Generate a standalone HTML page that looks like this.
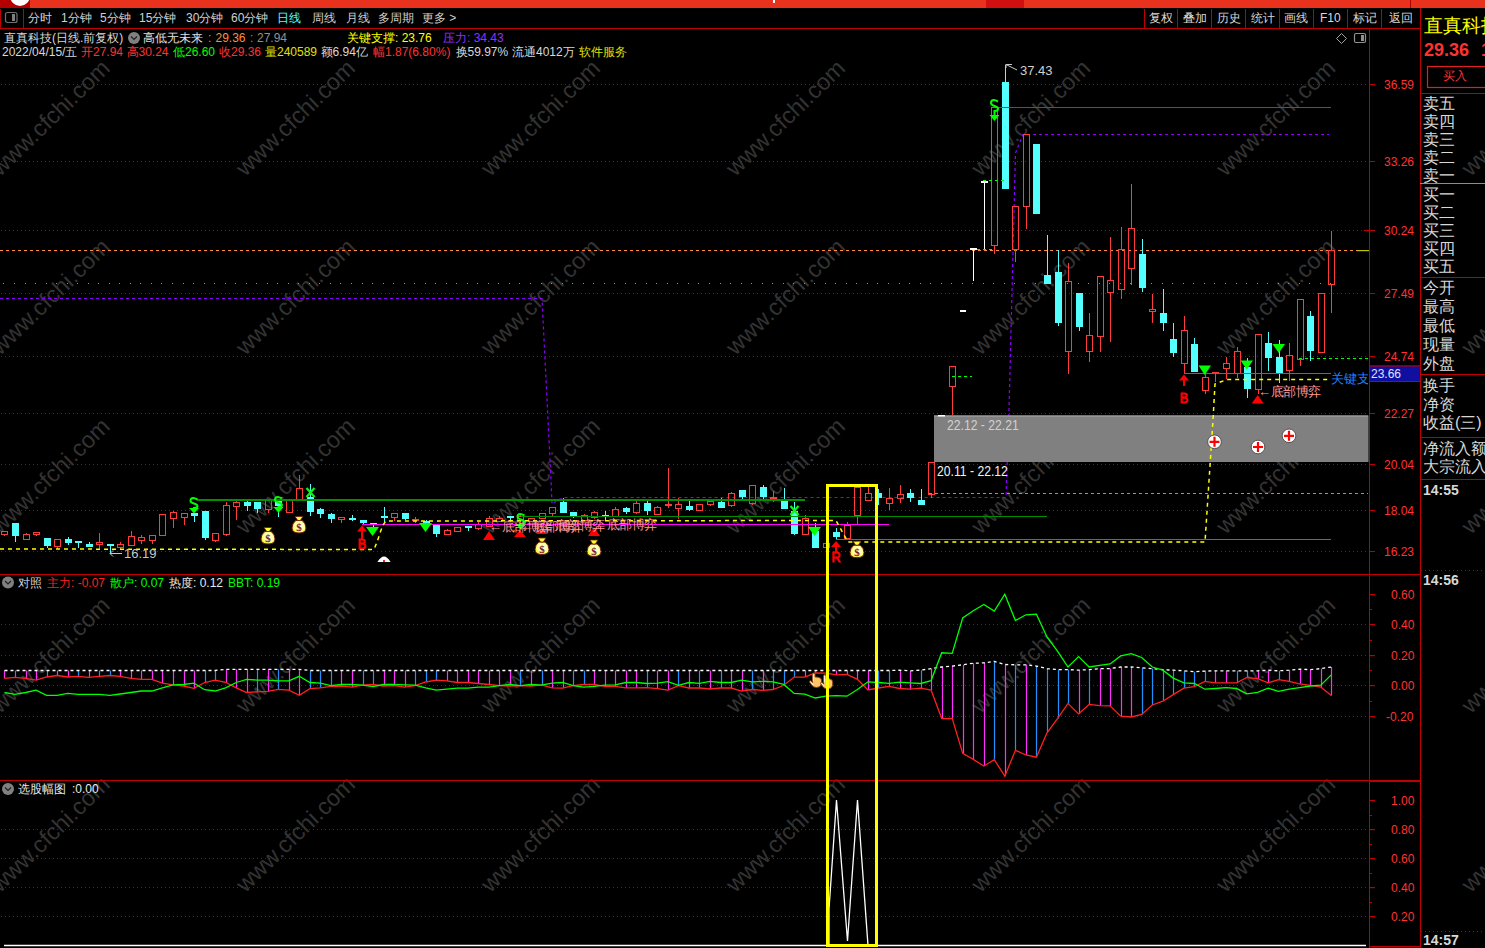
<!DOCTYPE html><html><head><meta charset="utf-8"><style>
html,body{margin:0;padding:0;background:#000;width:1485px;height:948px;overflow:hidden;font-family:"Liberation Sans",sans-serif;}
.t{position:absolute;white-space:nowrap;line-height:1;}
svg{position:absolute;left:0;top:0;}
</style></head><body>
<svg width="1485" height="948" viewBox="0 0 1485 948"><defs><radialGradient id="bagg" cx="0.55" cy="0.45" r="0.6"><stop offset="0" stop-color="#ffffe8"/><stop offset="0.6" stop-color="#ffffa0"/><stop offset="1" stop-color="#f0f000"/></radialGradient></defs>
<g><text x="51.4" y="119.1" transform="rotate(-44 51.4 119.1)" text-anchor="middle" dominant-baseline="middle" font-size="23.4" fill="#333333" font-family="Liberation Sans">www.cfchi.com</text><text x="296.5" y="119.1" transform="rotate(-44 296.5 119.1)" text-anchor="middle" dominant-baseline="middle" font-size="23.4" fill="#333333" font-family="Liberation Sans">www.cfchi.com</text><text x="541.6" y="119.1" transform="rotate(-44 541.6 119.1)" text-anchor="middle" dominant-baseline="middle" font-size="23.4" fill="#333333" font-family="Liberation Sans">www.cfchi.com</text><text x="786.7" y="119.1" transform="rotate(-44 786.7 119.1)" text-anchor="middle" dominant-baseline="middle" font-size="23.4" fill="#333333" font-family="Liberation Sans">www.cfchi.com</text><text x="1031.8" y="119.1" transform="rotate(-44 1031.8 119.1)" text-anchor="middle" dominant-baseline="middle" font-size="23.4" fill="#333333" font-family="Liberation Sans">www.cfchi.com</text><text x="1276.9" y="119.1" transform="rotate(-44 1276.9 119.1)" text-anchor="middle" dominant-baseline="middle" font-size="23.4" fill="#333333" font-family="Liberation Sans">www.cfchi.com</text><text x="1522.0" y="119.1" transform="rotate(-44 1522.0 119.1)" text-anchor="middle" dominant-baseline="middle" font-size="23.4" fill="#333333" font-family="Liberation Sans">www.cfchi.com</text><text x="51.4" y="298.1" transform="rotate(-44 51.4 298.1)" text-anchor="middle" dominant-baseline="middle" font-size="23.4" fill="#333333" font-family="Liberation Sans">www.cfchi.com</text><text x="296.5" y="298.1" transform="rotate(-44 296.5 298.1)" text-anchor="middle" dominant-baseline="middle" font-size="23.4" fill="#333333" font-family="Liberation Sans">www.cfchi.com</text><text x="541.6" y="298.1" transform="rotate(-44 541.6 298.1)" text-anchor="middle" dominant-baseline="middle" font-size="23.4" fill="#333333" font-family="Liberation Sans">www.cfchi.com</text><text x="786.7" y="298.1" transform="rotate(-44 786.7 298.1)" text-anchor="middle" dominant-baseline="middle" font-size="23.4" fill="#333333" font-family="Liberation Sans">www.cfchi.com</text><text x="1031.8" y="298.1" transform="rotate(-44 1031.8 298.1)" text-anchor="middle" dominant-baseline="middle" font-size="23.4" fill="#333333" font-family="Liberation Sans">www.cfchi.com</text><text x="1276.9" y="298.1" transform="rotate(-44 1276.9 298.1)" text-anchor="middle" dominant-baseline="middle" font-size="23.4" fill="#333333" font-family="Liberation Sans">www.cfchi.com</text><text x="1522.0" y="298.1" transform="rotate(-44 1522.0 298.1)" text-anchor="middle" dominant-baseline="middle" font-size="23.4" fill="#333333" font-family="Liberation Sans">www.cfchi.com</text><text x="51.4" y="477.2" transform="rotate(-44 51.4 477.2)" text-anchor="middle" dominant-baseline="middle" font-size="23.4" fill="#333333" font-family="Liberation Sans">www.cfchi.com</text><text x="296.5" y="477.2" transform="rotate(-44 296.5 477.2)" text-anchor="middle" dominant-baseline="middle" font-size="23.4" fill="#333333" font-family="Liberation Sans">www.cfchi.com</text><text x="541.6" y="477.2" transform="rotate(-44 541.6 477.2)" text-anchor="middle" dominant-baseline="middle" font-size="23.4" fill="#333333" font-family="Liberation Sans">www.cfchi.com</text><text x="786.7" y="477.2" transform="rotate(-44 786.7 477.2)" text-anchor="middle" dominant-baseline="middle" font-size="23.4" fill="#333333" font-family="Liberation Sans">www.cfchi.com</text><text x="1031.8" y="477.2" transform="rotate(-44 1031.8 477.2)" text-anchor="middle" dominant-baseline="middle" font-size="23.4" fill="#333333" font-family="Liberation Sans">www.cfchi.com</text><text x="1276.9" y="477.2" transform="rotate(-44 1276.9 477.2)" text-anchor="middle" dominant-baseline="middle" font-size="23.4" fill="#333333" font-family="Liberation Sans">www.cfchi.com</text><text x="1522.0" y="477.2" transform="rotate(-44 1522.0 477.2)" text-anchor="middle" dominant-baseline="middle" font-size="23.4" fill="#333333" font-family="Liberation Sans">www.cfchi.com</text><text x="51.4" y="656.3" transform="rotate(-44 51.4 656.3)" text-anchor="middle" dominant-baseline="middle" font-size="23.4" fill="#333333" font-family="Liberation Sans">www.cfchi.com</text><text x="296.5" y="656.3" transform="rotate(-44 296.5 656.3)" text-anchor="middle" dominant-baseline="middle" font-size="23.4" fill="#333333" font-family="Liberation Sans">www.cfchi.com</text><text x="541.6" y="656.3" transform="rotate(-44 541.6 656.3)" text-anchor="middle" dominant-baseline="middle" font-size="23.4" fill="#333333" font-family="Liberation Sans">www.cfchi.com</text><text x="786.7" y="656.3" transform="rotate(-44 786.7 656.3)" text-anchor="middle" dominant-baseline="middle" font-size="23.4" fill="#333333" font-family="Liberation Sans">www.cfchi.com</text><text x="1031.8" y="656.3" transform="rotate(-44 1031.8 656.3)" text-anchor="middle" dominant-baseline="middle" font-size="23.4" fill="#333333" font-family="Liberation Sans">www.cfchi.com</text><text x="1276.9" y="656.3" transform="rotate(-44 1276.9 656.3)" text-anchor="middle" dominant-baseline="middle" font-size="23.4" fill="#333333" font-family="Liberation Sans">www.cfchi.com</text><text x="1522.0" y="656.3" transform="rotate(-44 1522.0 656.3)" text-anchor="middle" dominant-baseline="middle" font-size="23.4" fill="#333333" font-family="Liberation Sans">www.cfchi.com</text><text x="51.4" y="835.3" transform="rotate(-44 51.4 835.3)" text-anchor="middle" dominant-baseline="middle" font-size="23.4" fill="#333333" font-family="Liberation Sans">www.cfchi.com</text><text x="296.5" y="835.3" transform="rotate(-44 296.5 835.3)" text-anchor="middle" dominant-baseline="middle" font-size="23.4" fill="#333333" font-family="Liberation Sans">www.cfchi.com</text><text x="541.6" y="835.3" transform="rotate(-44 541.6 835.3)" text-anchor="middle" dominant-baseline="middle" font-size="23.4" fill="#333333" font-family="Liberation Sans">www.cfchi.com</text><text x="786.7" y="835.3" transform="rotate(-44 786.7 835.3)" text-anchor="middle" dominant-baseline="middle" font-size="23.4" fill="#333333" font-family="Liberation Sans">www.cfchi.com</text><text x="1031.8" y="835.3" transform="rotate(-44 1031.8 835.3)" text-anchor="middle" dominant-baseline="middle" font-size="23.4" fill="#333333" font-family="Liberation Sans">www.cfchi.com</text><text x="1276.9" y="835.3" transform="rotate(-44 1276.9 835.3)" text-anchor="middle" dominant-baseline="middle" font-size="23.4" fill="#333333" font-family="Liberation Sans">www.cfchi.com</text><text x="1522.0" y="835.3" transform="rotate(-44 1522.0 835.3)" text-anchor="middle" dominant-baseline="middle" font-size="23.4" fill="#333333" font-family="Liberation Sans">www.cfchi.com</text><text x="51.4" y="1014.4" transform="rotate(-44 51.4 1014.4)" text-anchor="middle" dominant-baseline="middle" font-size="23.4" fill="#333333" font-family="Liberation Sans">www.cfchi.com</text><text x="296.5" y="1014.4" transform="rotate(-44 296.5 1014.4)" text-anchor="middle" dominant-baseline="middle" font-size="23.4" fill="#333333" font-family="Liberation Sans">www.cfchi.com</text><text x="541.6" y="1014.4" transform="rotate(-44 541.6 1014.4)" text-anchor="middle" dominant-baseline="middle" font-size="23.4" fill="#333333" font-family="Liberation Sans">www.cfchi.com</text><text x="786.7" y="1014.4" transform="rotate(-44 786.7 1014.4)" text-anchor="middle" dominant-baseline="middle" font-size="23.4" fill="#333333" font-family="Liberation Sans">www.cfchi.com</text><text x="1031.8" y="1014.4" transform="rotate(-44 1031.8 1014.4)" text-anchor="middle" dominant-baseline="middle" font-size="23.4" fill="#333333" font-family="Liberation Sans">www.cfchi.com</text><text x="1276.9" y="1014.4" transform="rotate(-44 1276.9 1014.4)" text-anchor="middle" dominant-baseline="middle" font-size="23.4" fill="#333333" font-family="Liberation Sans">www.cfchi.com</text><text x="1522.0" y="1014.4" transform="rotate(-44 1522.0 1014.4)" text-anchor="middle" dominant-baseline="middle" font-size="23.4" fill="#333333" font-family="Liberation Sans">www.cfchi.com</text></g>
<line x1="1" y1="84.5" x2="1366" y2="84.5" stroke="#b40000" stroke-width="1" stroke-dasharray="1 3" shape-rendering="crispEdges"/><line x1="1" y1="161.5" x2="1366" y2="161.5" stroke="#b40000" stroke-width="1" stroke-dasharray="1 3" shape-rendering="crispEdges"/><line x1="1" y1="230.5" x2="1366" y2="230.5" stroke="#b40000" stroke-width="1" stroke-dasharray="1 3" shape-rendering="crispEdges"/><line x1="1" y1="293.5" x2="1366" y2="293.5" stroke="#b40000" stroke-width="1" stroke-dasharray="1 3" shape-rendering="crispEdges"/><line x1="1" y1="356.5" x2="1366" y2="356.5" stroke="#b40000" stroke-width="1" stroke-dasharray="1 3" shape-rendering="crispEdges"/><line x1="1" y1="413.5" x2="1366" y2="413.5" stroke="#b40000" stroke-width="1" stroke-dasharray="1 3" shape-rendering="crispEdges"/><line x1="1" y1="464.5" x2="1366" y2="464.5" stroke="#b40000" stroke-width="1" stroke-dasharray="1 3" shape-rendering="crispEdges"/><line x1="1" y1="510.5" x2="1366" y2="510.5" stroke="#b40000" stroke-width="1" stroke-dasharray="1 3" shape-rendering="crispEdges"/><line x1="1" y1="551.5" x2="1366" y2="551.5" stroke="#b40000" stroke-width="1" stroke-dasharray="1 3" shape-rendering="crispEdges"/><line x1="0" y1="250.5" x2="1366" y2="250.5" stroke="#ff8c40" stroke-width="1" stroke-dasharray="3 3"/><g fill="#909090"><rect x="3" y="283" width="1" height="1"/><rect x="14" y="283" width="1" height="1"/><rect x="25" y="283" width="1" height="1"/><rect x="35" y="283" width="1" height="1"/><rect x="46" y="283" width="1" height="1"/><rect x="56" y="283" width="1" height="1"/><rect x="67" y="283" width="1" height="1"/><rect x="77" y="283" width="1" height="1"/><rect x="88" y="283" width="1" height="1"/><rect x="98" y="283" width="1" height="1"/><rect x="109" y="283" width="1" height="1"/><rect x="119" y="283" width="1" height="1"/><rect x="130" y="283" width="1" height="1"/><rect x="140" y="283" width="1" height="1"/><rect x="151" y="283" width="1" height="1"/><rect x="161" y="283" width="1" height="1"/><rect x="172" y="283" width="1" height="1"/><rect x="183" y="283" width="1" height="1"/><rect x="193" y="283" width="1" height="1"/><rect x="204" y="283" width="1" height="1"/><rect x="214" y="283" width="1" height="1"/><rect x="225" y="283" width="1" height="1"/><rect x="235" y="283" width="1" height="1"/><rect x="246" y="283" width="1" height="1"/><rect x="256" y="283" width="1" height="1"/><rect x="267" y="283" width="1" height="1"/><rect x="277" y="283" width="1" height="1"/><rect x="288" y="283" width="1" height="1"/><rect x="298" y="283" width="1" height="1"/><rect x="309" y="283" width="1" height="1"/><rect x="319" y="283" width="1" height="1"/><rect x="330" y="283" width="1" height="1"/><rect x="340" y="283" width="1" height="1"/><rect x="351" y="283" width="1" height="1"/><rect x="362" y="283" width="1" height="1"/><rect x="372" y="283" width="1" height="1"/><rect x="383" y="283" width="1" height="1"/><rect x="393" y="283" width="1" height="1"/><rect x="404" y="283" width="1" height="1"/><rect x="414" y="283" width="1" height="1"/><rect x="425" y="283" width="1" height="1"/><rect x="435" y="283" width="1" height="1"/><rect x="446" y="283" width="1" height="1"/><rect x="456" y="283" width="1" height="1"/><rect x="467" y="283" width="1" height="1"/><rect x="477" y="283" width="1" height="1"/><rect x="488" y="283" width="1" height="1"/><rect x="498" y="283" width="1" height="1"/><rect x="509" y="283" width="1" height="1"/><rect x="519" y="283" width="1" height="1"/><rect x="530" y="283" width="1" height="1"/><rect x="541" y="283" width="1" height="1"/><rect x="551" y="283" width="1" height="1"/><rect x="562" y="283" width="1" height="1"/><rect x="572" y="283" width="1" height="1"/><rect x="583" y="283" width="1" height="1"/><rect x="593" y="283" width="1" height="1"/><rect x="604" y="283" width="1" height="1"/><rect x="614" y="283" width="1" height="1"/><rect x="625" y="283" width="1" height="1"/><rect x="635" y="283" width="1" height="1"/><rect x="646" y="283" width="1" height="1"/><rect x="656" y="283" width="1" height="1"/><rect x="667" y="283" width="1" height="1"/><rect x="677" y="283" width="1" height="1"/><rect x="688" y="283" width="1" height="1"/><rect x="698" y="283" width="1" height="1"/><rect x="709" y="283" width="1" height="1"/><rect x="720" y="283" width="1" height="1"/><rect x="730" y="283" width="1" height="1"/><rect x="741" y="283" width="1" height="1"/><rect x="751" y="283" width="1" height="1"/><rect x="762" y="283" width="1" height="1"/><rect x="772" y="283" width="1" height="1"/><rect x="783" y="283" width="1" height="1"/><rect x="793" y="283" width="1" height="1"/><rect x="804" y="283" width="1" height="1"/><rect x="814" y="283" width="1" height="1"/><rect x="825" y="283" width="1" height="1"/><rect x="835" y="283" width="1" height="1"/><rect x="846" y="283" width="1" height="1"/><rect x="856" y="283" width="1" height="1"/><rect x="867" y="283" width="1" height="1"/><rect x="877" y="283" width="1" height="1"/><rect x="888" y="283" width="1" height="1"/><rect x="899" y="283" width="1" height="1"/><rect x="909" y="283" width="1" height="1"/><rect x="920" y="283" width="1" height="1"/><rect x="930" y="283" width="1" height="1"/><rect x="941" y="283" width="1" height="1"/><rect x="951" y="283" width="1" height="1"/><rect x="962" y="283" width="1" height="1"/><rect x="972" y="283" width="1" height="1"/><rect x="983" y="283" width="1" height="1"/><rect x="993" y="283" width="1" height="1"/><rect x="1004" y="283" width="1" height="1"/><rect x="1014" y="283" width="1" height="1"/><rect x="1025" y="283" width="1" height="1"/><rect x="1035" y="283" width="1" height="1"/><rect x="1046" y="283" width="1" height="1"/><rect x="1057" y="283" width="1" height="1"/><rect x="1067" y="283" width="1" height="1"/><rect x="1078" y="283" width="1" height="1"/><rect x="1088" y="283" width="1" height="1"/><rect x="1099" y="283" width="1" height="1"/><rect x="1109" y="283" width="1" height="1"/><rect x="1120" y="283" width="1" height="1"/><rect x="1130" y="283" width="1" height="1"/><rect x="1141" y="283" width="1" height="1"/><rect x="1151" y="283" width="1" height="1"/><rect x="1162" y="283" width="1" height="1"/><rect x="1172" y="283" width="1" height="1"/><rect x="1183" y="283" width="1" height="1"/><rect x="1193" y="283" width="1" height="1"/><rect x="1204" y="283" width="1" height="1"/><rect x="1214" y="283" width="1" height="1"/><rect x="1225" y="283" width="1" height="1"/><rect x="1236" y="283" width="1" height="1"/><rect x="1246" y="283" width="1" height="1"/><rect x="1257" y="283" width="1" height="1"/><rect x="1267" y="283" width="1" height="1"/><rect x="1278" y="283" width="1" height="1"/><rect x="1288" y="283" width="1" height="1"/><rect x="1299" y="283" width="1" height="1"/><rect x="1309" y="283" width="1" height="1"/><rect x="1320" y="283" width="1" height="1"/><rect x="1330" y="283" width="1" height="1"/></g><path d="M0,298.5 L542,298.5 L551,480 L552,504 L558,500 L564,497.5 L1006,497.5 L1009,410 L1015.5,153 L1023,134.5 L1329,134.5" fill="none" stroke="#8c00ff" stroke-width="1.2" stroke-dasharray="3 3"/><rect x="934" y="415.5" width="434.5" height="46.5" fill="#808080"/><line x1="934" y1="416" x2="1368" y2="416" stroke="#a8a8a8" stroke-width="1"/><rect x="938" y="415" width="7" height="1.5" fill="#fff"/><g shape-rendering="crispEdges"><line x1="4.5" y1="531" x2="4.5" y2="531" stroke="#ff3c3c"/><line x1="4.5" y1="534" x2="4.5" y2="536" stroke="#ff3c3c"/><rect x="1.5" y="531.5" width="6" height="3" fill="none" stroke="#ff3c3c"/><line x1="15.5" y1="523" x2="15.5" y2="542" stroke="#54ffff"/><rect x="12" y="523" width="7" height="13" fill="#54ffff"/><line x1="26.5" y1="533" x2="26.5" y2="534" stroke="#ff3c3c"/><line x1="26.5" y1="539" x2="26.5" y2="540" stroke="#ff3c3c"/><rect x="23.5" y="534.5" width="6" height="5" fill="none" stroke="#ff3c3c"/><line x1="36.5" y1="532" x2="36.5" y2="532" stroke="#ff3c3c"/><line x1="36.5" y1="534" x2="36.5" y2="536" stroke="#ff3c3c"/><rect x="33.5" y="532.5" width="6" height="2" fill="none" stroke="#ff3c3c"/><line x1="47.5" y1="538" x2="47.5" y2="548" stroke="#54ffff"/><rect x="44" y="538" width="7" height="8" fill="#54ffff"/><line x1="57.5" y1="539" x2="57.5" y2="539" stroke="#ff3c3c"/><line x1="57.5" y1="546" x2="57.5" y2="549" stroke="#ff3c3c"/><rect x="54.5" y="539.5" width="6" height="7" fill="none" stroke="#ff3c3c"/><line x1="68.5" y1="537" x2="68.5" y2="545" stroke="#54ffff"/><rect x="65" y="539" width="7" height="4" fill="#54ffff"/><line x1="78.5" y1="541" x2="78.5" y2="548" stroke="#54ffff"/><rect x="75" y="541" width="7" height="2" fill="#54ffff"/><line x1="89.5" y1="542" x2="89.5" y2="547" stroke="#54ffff"/><rect x="86" y="544" width="7" height="3" fill="#54ffff"/><line x1="99.5" y1="533" x2="99.5" y2="542" stroke="#ff3c3c"/><line x1="99.5" y1="544" x2="99.5" y2="549" stroke="#ff3c3c"/><rect x="96.5" y="542.5" width="6" height="2" fill="none" stroke="#ff3c3c"/><line x1="110.5" y1="544" x2="110.5" y2="553" stroke="#54ffff"/><rect x="107" y="544" width="7" height="2" fill="#54ffff"/><line x1="120.5" y1="542" x2="120.5" y2="544" stroke="#ff3c3c"/><line x1="120.5" y1="547" x2="120.5" y2="550" stroke="#ff3c3c"/><rect x="117.5" y="544.5" width="6" height="3" fill="none" stroke="#ff3c3c"/><line x1="131.5" y1="531" x2="131.5" y2="536" stroke="#ff3c3c"/><line x1="131.5" y1="545" x2="131.5" y2="546" stroke="#ff3c3c"/><rect x="128.5" y="536.5" width="6" height="9" fill="none" stroke="#ff3c3c"/><line x1="141.5" y1="535" x2="141.5" y2="537" stroke="#ff3c3c"/><line x1="141.5" y1="540" x2="141.5" y2="544" stroke="#ff3c3c"/><rect x="138.5" y="537.5" width="6" height="3" fill="none" stroke="#ff3c3c"/><line x1="152.5" y1="535" x2="152.5" y2="535" stroke="#ff3c3c"/><line x1="152.5" y1="540" x2="152.5" y2="544" stroke="#ff3c3c"/><rect x="149.5" y="535.5" width="6" height="5" fill="none" stroke="#ff3c3c"/><line x1="162.5" y1="514" x2="162.5" y2="514" stroke="#ff3c3c"/><line x1="162.5" y1="535" x2="162.5" y2="536" stroke="#ff3c3c"/><rect x="159.5" y="514.5" width="6" height="21" fill="none" stroke="#ff3c3c"/><line x1="173.5" y1="511" x2="173.5" y2="512" stroke="#ff3c3c"/><line x1="173.5" y1="518" x2="173.5" y2="528" stroke="#ff3c3c"/><rect x="170.5" y="512.5" width="6" height="6" fill="none" stroke="#ff3c3c"/><line x1="184.5" y1="513" x2="184.5" y2="513" stroke="#ff3c3c"/><line x1="184.5" y1="517" x2="184.5" y2="525" stroke="#ff3c3c"/><rect x="181.5" y="513.5" width="6" height="4" fill="none" stroke="#ff3c3c"/><line x1="194.5" y1="513" x2="194.5" y2="522" stroke="#54ffff"/><rect x="191" y="513" width="7" height="3" fill="#54ffff"/><line x1="205.5" y1="511" x2="205.5" y2="540" stroke="#54ffff"/><rect x="202" y="511" width="7" height="27" fill="#54ffff"/><line x1="215.5" y1="533" x2="215.5" y2="533" stroke="#ff3c3c"/><line x1="215.5" y1="540" x2="215.5" y2="542" stroke="#ff3c3c"/><rect x="212.5" y="533.5" width="6" height="7" fill="none" stroke="#ff3c3c"/><line x1="226.5" y1="502" x2="226.5" y2="505" stroke="#ff3c3c"/><line x1="226.5" y1="534" x2="226.5" y2="536" stroke="#ff3c3c"/><rect x="223.5" y="505.5" width="6" height="29" fill="none" stroke="#ff3c3c"/><line x1="236.5" y1="500" x2="236.5" y2="502" stroke="#ff3c3c"/><line x1="236.5" y1="506" x2="236.5" y2="520" stroke="#ff3c3c"/><rect x="233.5" y="502.5" width="6" height="4" fill="none" stroke="#ff3c3c"/><line x1="247.5" y1="499" x2="247.5" y2="511" stroke="#54ffff"/><rect x="244" y="502" width="7" height="4" fill="#54ffff"/><line x1="257.5" y1="502" x2="257.5" y2="513" stroke="#54ffff"/><rect x="254" y="502" width="7" height="7" fill="#54ffff"/><line x1="268.5" y1="499" x2="268.5" y2="499" stroke="#ff3c3c"/><line x1="268.5" y1="509" x2="268.5" y2="513" stroke="#ff3c3c"/><rect x="265.5" y="499.5" width="6" height="10" fill="none" stroke="#ff3c3c"/><line x1="278.5" y1="501" x2="278.5" y2="517" stroke="#54ffff"/><rect x="275" y="501" width="7" height="5" fill="#54ffff"/><line x1="289.5" y1="500" x2="289.5" y2="500" stroke="#ff3c3c"/><line x1="289.5" y1="512" x2="289.5" y2="513" stroke="#ff3c3c"/><rect x="286.5" y="500.5" width="6" height="12" fill="none" stroke="#ff3c3c"/><line x1="299.5" y1="475" x2="299.5" y2="488" stroke="#ff3c3c"/><line x1="299.5" y1="499" x2="299.5" y2="500" stroke="#ff3c3c"/><rect x="296.5" y="488.5" width="6" height="11" fill="none" stroke="#ff3c3c"/><line x1="310.5" y1="484" x2="310.5" y2="516" stroke="#54ffff"/><rect x="307" y="497" width="7" height="15" fill="#54ffff"/><line x1="320.5" y1="508" x2="320.5" y2="518" stroke="#54ffff"/><rect x="317" y="509" width="7" height="5" fill="#54ffff"/><line x1="331.5" y1="513" x2="331.5" y2="523" stroke="#54ffff"/><rect x="328" y="514" width="7" height="5" fill="#54ffff"/><line x1="341.5" y1="517" x2="341.5" y2="517" stroke="#ff3c3c"/><line x1="341.5" y1="519" x2="341.5" y2="523" stroke="#ff3c3c"/><rect x="338.5" y="517.5" width="6" height="2" fill="none" stroke="#ff3c3c"/><line x1="352.5" y1="515" x2="352.5" y2="521" stroke="#54ffff"/><rect x="349" y="518" width="7" height="2" fill="#54ffff"/><line x1="363.5" y1="520" x2="363.5" y2="525" stroke="#54ffff"/><rect x="360" y="520" width="7" height="3" fill="#54ffff"/><line x1="373.5" y1="523" x2="373.5" y2="528" stroke="#54ffff"/><rect x="370" y="523" width="7" height="2" fill="#54ffff"/><line x1="384.5" y1="507" x2="384.5" y2="523" stroke="#54ffff"/><rect x="381" y="516" width="7" height="2" fill="#54ffff"/><line x1="394.5" y1="513" x2="394.5" y2="513" stroke="#ff3c3c"/><line x1="394.5" y1="517" x2="394.5" y2="521" stroke="#ff3c3c"/><rect x="391.5" y="513.5" width="6" height="4" fill="none" stroke="#ff3c3c"/><line x1="405.5" y1="513" x2="405.5" y2="520" stroke="#54ffff"/><rect x="402" y="513" width="7" height="6" fill="#54ffff"/><line x1="415.5" y1="517" x2="415.5" y2="519" stroke="#ff3c3c"/><line x1="415.5" y1="520" x2="415.5" y2="523" stroke="#ff3c3c"/><rect x="412.5" y="519.5" width="6" height="1" fill="none" stroke="#ff3c3c"/><line x1="426.5" y1="520" x2="426.5" y2="527" stroke="#54ffff"/><rect x="423" y="521" width="7" height="5" fill="#54ffff"/><line x1="436.5" y1="525" x2="436.5" y2="537" stroke="#54ffff"/><rect x="433" y="525" width="7" height="9" fill="#54ffff"/><line x1="447.5" y1="529" x2="447.5" y2="530" stroke="#ff3c3c"/><line x1="447.5" y1="534" x2="447.5" y2="535" stroke="#ff3c3c"/><rect x="444.5" y="530.5" width="6" height="4" fill="none" stroke="#ff3c3c"/><line x1="457.5" y1="527" x2="457.5" y2="527" stroke="#ff3c3c"/><line x1="457.5" y1="531" x2="457.5" y2="532" stroke="#ff3c3c"/><rect x="454.5" y="527.5" width="6" height="4" fill="none" stroke="#ff3c3c"/><line x1="468.5" y1="526" x2="468.5" y2="531" stroke="#54ffff"/><rect x="465" y="526" width="7" height="2" fill="#54ffff"/><line x1="478.5" y1="522" x2="478.5" y2="524" stroke="#ff3c3c"/><line x1="478.5" y1="528" x2="478.5" y2="530" stroke="#ff3c3c"/><rect x="475.5" y="524.5" width="6" height="4" fill="none" stroke="#ff3c3c"/><line x1="489.5" y1="516" x2="489.5" y2="518" stroke="#ff3c3c"/><line x1="489.5" y1="526" x2="489.5" y2="527" stroke="#ff3c3c"/><rect x="486.5" y="518.5" width="6" height="8" fill="none" stroke="#ff3c3c"/><line x1="499.5" y1="516" x2="499.5" y2="518" stroke="#ff3c3c"/><line x1="499.5" y1="521" x2="499.5" y2="522" stroke="#ff3c3c"/><rect x="496.5" y="518.5" width="6" height="3" fill="none" stroke="#ff3c3c"/><line x1="510.5" y1="516" x2="510.5" y2="522" stroke="#54ffff"/><rect x="507" y="516" width="7" height="2" fill="#54ffff"/><line x1="520.5" y1="515" x2="520.5" y2="516" stroke="#ff3c3c"/><line x1="520.5" y1="520" x2="520.5" y2="522" stroke="#ff3c3c"/><rect x="517.5" y="516.5" width="6" height="4" fill="none" stroke="#ff3c3c"/><line x1="531.5" y1="518" x2="531.5" y2="518" stroke="#ff3c3c"/><line x1="531.5" y1="521" x2="531.5" y2="522" stroke="#ff3c3c"/><rect x="528.5" y="518.5" width="6" height="3" fill="none" stroke="#ff3c3c"/><line x1="542.5" y1="513" x2="542.5" y2="513" stroke="#ff3c3c"/><line x1="542.5" y1="518" x2="542.5" y2="519" stroke="#ff3c3c"/><rect x="539.5" y="513.5" width="6" height="5" fill="none" stroke="#ff3c3c"/><line x1="552.5" y1="507" x2="552.5" y2="507" stroke="#ff3c3c"/><line x1="552.5" y1="513" x2="552.5" y2="516" stroke="#ff3c3c"/><rect x="549.5" y="507.5" width="6" height="6" fill="none" stroke="#ff3c3c"/><line x1="563.5" y1="498" x2="563.5" y2="513" stroke="#54ffff"/><rect x="560" y="502" width="7" height="11" fill="#54ffff"/><line x1="573.5" y1="512" x2="573.5" y2="518" stroke="#54ffff"/><rect x="570" y="512" width="7" height="5" fill="#54ffff"/><line x1="584.5" y1="514" x2="584.5" y2="515" stroke="#ff3c3c"/><line x1="584.5" y1="520" x2="584.5" y2="521" stroke="#ff3c3c"/><rect x="581.5" y="515.5" width="6" height="5" fill="none" stroke="#ff3c3c"/><line x1="594.5" y1="511" x2="594.5" y2="512" stroke="#ff3c3c"/><line x1="594.5" y1="517" x2="594.5" y2="519" stroke="#ff3c3c"/><rect x="591.5" y="512.5" width="6" height="5" fill="none" stroke="#ff3c3c"/><line x1="605.5" y1="511" x2="605.5" y2="521" stroke="#54ffff"/><rect x="602" y="515" width="7" height="2" fill="#54ffff"/><line x1="615.5" y1="507" x2="615.5" y2="509" stroke="#ff3c3c"/><line x1="615.5" y1="516" x2="615.5" y2="517" stroke="#ff3c3c"/><rect x="612.5" y="509.5" width="6" height="7" fill="none" stroke="#ff3c3c"/><line x1="626.5" y1="507" x2="626.5" y2="514" stroke="#54ffff"/><rect x="623" y="508" width="7" height="4" fill="#54ffff"/><line x1="636.5" y1="501" x2="636.5" y2="503" stroke="#ff3c3c"/><line x1="636.5" y1="512" x2="636.5" y2="514" stroke="#ff3c3c"/><rect x="633.5" y="503.5" width="6" height="9" fill="none" stroke="#ff3c3c"/><line x1="647.5" y1="501" x2="647.5" y2="515" stroke="#54ffff"/><rect x="644" y="503" width="7" height="8" fill="#54ffff"/><line x1="657.5" y1="506" x2="657.5" y2="507" stroke="#ff3c3c"/><line x1="657.5" y1="514" x2="657.5" y2="515" stroke="#ff3c3c"/><rect x="654.5" y="507.5" width="6" height="7" fill="none" stroke="#ff3c3c"/><line x1="668.5" y1="468" x2="668.5" y2="504" stroke="#ff3c3c"/><line x1="668.5" y1="505" x2="668.5" y2="508" stroke="#ff3c3c"/><rect x="665.5" y="504.5" width="6" height="1" fill="none" stroke="#ff3c3c"/><line x1="678.5" y1="498" x2="678.5" y2="504" stroke="#ff3c3c"/><line x1="678.5" y1="508" x2="678.5" y2="519" stroke="#ff3c3c"/><rect x="675.5" y="504.5" width="6" height="4" fill="none" stroke="#ff3c3c"/><line x1="689.5" y1="501" x2="689.5" y2="511" stroke="#54ffff"/><rect x="686" y="506" width="7" height="4" fill="#54ffff"/><line x1="699.5" y1="504" x2="699.5" y2="504" stroke="#ff3c3c"/><line x1="699.5" y1="510" x2="699.5" y2="511" stroke="#ff3c3c"/><rect x="696.5" y="504.5" width="6" height="6" fill="none" stroke="#ff3c3c"/><line x1="710.5" y1="501" x2="710.5" y2="501" stroke="#ff3c3c"/><line x1="710.5" y1="504" x2="710.5" y2="506" stroke="#ff3c3c"/><rect x="707.5" y="501.5" width="6" height="3" fill="none" stroke="#ff3c3c"/><line x1="721.5" y1="498" x2="721.5" y2="508" stroke="#54ffff"/><rect x="718" y="502" width="7" height="6" fill="#54ffff"/><line x1="731.5" y1="492" x2="731.5" y2="493" stroke="#ff3c3c"/><line x1="731.5" y1="505" x2="731.5" y2="507" stroke="#ff3c3c"/><rect x="728.5" y="493.5" width="6" height="12" fill="none" stroke="#ff3c3c"/><line x1="742.5" y1="490" x2="742.5" y2="499" stroke="#54ffff"/><rect x="739" y="490" width="7" height="7" fill="#54ffff"/><line x1="752.5" y1="485" x2="752.5" y2="485" stroke="#ff3c3c"/><line x1="752.5" y1="503" x2="752.5" y2="505" stroke="#ff3c3c"/><rect x="749.5" y="485.5" width="6" height="18" fill="none" stroke="#ff3c3c"/><line x1="763.5" y1="485" x2="763.5" y2="499" stroke="#54ffff"/><rect x="760" y="487" width="7" height="10" fill="#54ffff"/><line x1="773.5" y1="491" x2="773.5" y2="497" stroke="#ff3c3c"/><line x1="773.5" y1="498" x2="773.5" y2="502" stroke="#ff3c3c"/><rect x="770.5" y="497.5" width="6" height="1" fill="none" stroke="#ff3c3c"/><line x1="784.5" y1="488" x2="784.5" y2="509" stroke="#54ffff"/><rect x="781" y="500" width="7" height="9" fill="#54ffff"/><line x1="794.5" y1="502" x2="794.5" y2="535" stroke="#54ffff"/><rect x="791" y="511" width="7" height="23" fill="#54ffff"/><line x1="805.5" y1="515" x2="805.5" y2="518" stroke="#ff3c3c"/><line x1="805.5" y1="534" x2="805.5" y2="535" stroke="#ff3c3c"/><rect x="802.5" y="518.5" width="6" height="16" fill="none" stroke="#ff3c3c"/><line x1="815.5" y1="523" x2="815.5" y2="548" stroke="#54ffff"/><rect x="812" y="531" width="7" height="17" fill="#54ffff"/><line x1="826.5" y1="543" x2="826.5" y2="543" stroke="#ff3c3c"/><line x1="826.5" y1="547" x2="826.5" y2="548" stroke="#ff3c3c"/><rect x="823.5" y="543.5" width="6" height="4" fill="none" stroke="#ff3c3c"/><line x1="836.5" y1="528" x2="836.5" y2="540" stroke="#54ffff"/><rect x="833" y="532" width="7" height="5" fill="#54ffff"/><line x1="847.5" y1="522" x2="847.5" y2="525" stroke="#ff3c3c"/><line x1="847.5" y1="538" x2="847.5" y2="539" stroke="#ff3c3c"/><rect x="844.5" y="525.5" width="6" height="13" fill="none" stroke="#ff3c3c"/><line x1="857.5" y1="486" x2="857.5" y2="487" stroke="#ff3c3c"/><line x1="857.5" y1="515" x2="857.5" y2="525" stroke="#ff3c3c"/><rect x="854.5" y="487.5" width="6" height="28" fill="none" stroke="#ff3c3c"/><line x1="868.5" y1="487" x2="868.5" y2="493" stroke="#ff3c3c"/><line x1="868.5" y1="500" x2="868.5" y2="501" stroke="#ff3c3c"/><rect x="865.5" y="493.5" width="6" height="7" fill="none" stroke="#ff3c3c"/><line x1="878.5" y1="489" x2="878.5" y2="505" stroke="#54ffff"/><rect x="875" y="493" width="7" height="5" fill="#54ffff"/><line x1="889.5" y1="488" x2="889.5" y2="498" stroke="#ff3c3c"/><line x1="889.5" y1="503" x2="889.5" y2="510" stroke="#ff3c3c"/><rect x="886.5" y="498.5" width="6" height="5" fill="none" stroke="#ff3c3c"/><line x1="900.5" y1="485" x2="900.5" y2="494" stroke="#ff3c3c"/><line x1="900.5" y1="498" x2="900.5" y2="503" stroke="#ff3c3c"/><rect x="897.5" y="494.5" width="6" height="4" fill="none" stroke="#ff3c3c"/><line x1="910.5" y1="489" x2="910.5" y2="502" stroke="#54ffff"/><rect x="907" y="493" width="7" height="5" fill="#54ffff"/><line x1="921.5" y1="489" x2="921.5" y2="505" stroke="#54ffff"/><rect x="918" y="500" width="7" height="5" fill="#54ffff"/><line x1="931.5" y1="462" x2="931.5" y2="462" stroke="#ff3c3c"/><line x1="931.5" y1="494" x2="931.5" y2="498" stroke="#ff3c3c"/><rect x="928.5" y="462.5" width="6" height="32" fill="none" stroke="#ff3c3c"/><line x1="952.5" y1="366" x2="952.5" y2="366" stroke="#ff3c3c"/><line x1="952.5" y1="386" x2="952.5" y2="415" stroke="#ff3c3c"/><rect x="949.5" y="366.5" width="6" height="20" fill="none" stroke="#ff3c3c"/><line x1="994.5" y1="107" x2="994.5" y2="107" stroke="#ff3c3c"/><line x1="994.5" y1="245" x2="994.5" y2="254" stroke="#ff3c3c"/><rect x="991.5" y="107.5" width="6" height="138" fill="none" stroke="#ff3c3c"/><line x1="1005.5" y1="65" x2="1005.5" y2="189" stroke="#54ffff"/><rect x="1002" y="82" width="7" height="107" fill="#54ffff"/><line x1="1015.5" y1="206" x2="1015.5" y2="206" stroke="#ff3c3c"/><line x1="1015.5" y1="249" x2="1015.5" y2="262" stroke="#ff3c3c"/><rect x="1012.5" y="206.5" width="6" height="43" fill="none" stroke="#ff3c3c"/><line x1="1026.5" y1="134" x2="1026.5" y2="134" stroke="#ff3c3c"/><line x1="1026.5" y1="206" x2="1026.5" y2="229" stroke="#ff3c3c"/><rect x="1023.5" y="134.5" width="6" height="72" fill="none" stroke="#ff3c3c"/><line x1="1036.5" y1="144" x2="1036.5" y2="214" stroke="#54ffff"/><rect x="1033" y="144" width="7" height="70" fill="#54ffff"/><line x1="1047.5" y1="235" x2="1047.5" y2="284" stroke="#54ffff"/><rect x="1044" y="275" width="7" height="9" fill="#54ffff"/><line x1="1058.5" y1="250" x2="1058.5" y2="326" stroke="#54ffff"/><rect x="1055" y="272" width="7" height="51" fill="#54ffff"/><line x1="1068.5" y1="263" x2="1068.5" y2="281" stroke="#ff3c3c"/><line x1="1068.5" y1="351" x2="1068.5" y2="374" stroke="#ff3c3c"/><rect x="1065.5" y="281.5" width="6" height="70" fill="none" stroke="#ff3c3c"/><line x1="1079.5" y1="293" x2="1079.5" y2="331" stroke="#54ffff"/><rect x="1076" y="293" width="7" height="34" fill="#54ffff"/><line x1="1089.5" y1="313" x2="1089.5" y2="335" stroke="#ff3c3c"/><line x1="1089.5" y1="351" x2="1089.5" y2="362" stroke="#ff3c3c"/><rect x="1086.5" y="335.5" width="6" height="16" fill="none" stroke="#ff3c3c"/><line x1="1100.5" y1="276" x2="1100.5" y2="276" stroke="#ff3c3c"/><line x1="1100.5" y1="336" x2="1100.5" y2="352" stroke="#ff3c3c"/><rect x="1097.5" y="276.5" width="6" height="60" fill="none" stroke="#ff3c3c"/><line x1="1110.5" y1="237" x2="1110.5" y2="280" stroke="#ff3c3c"/><line x1="1110.5" y1="292" x2="1110.5" y2="342" stroke="#ff3c3c"/><rect x="1107.5" y="280.5" width="6" height="12" fill="none" stroke="#ff3c3c"/><line x1="1121.5" y1="227" x2="1121.5" y2="249" stroke="#ff3c3c"/><line x1="1121.5" y1="289" x2="1121.5" y2="299" stroke="#ff3c3c"/><rect x="1118.5" y="249.5" width="6" height="40" fill="none" stroke="#ff3c3c"/><line x1="1131.5" y1="184" x2="1131.5" y2="228" stroke="#ff3c3c"/><line x1="1131.5" y1="268" x2="1131.5" y2="285" stroke="#ff3c3c"/><rect x="1128.5" y="228.5" width="6" height="40" fill="none" stroke="#ff3c3c"/><line x1="1142.5" y1="239" x2="1142.5" y2="292" stroke="#54ffff"/><rect x="1139" y="254" width="7" height="34" fill="#54ffff"/><line x1="1152.5" y1="294" x2="1152.5" y2="309" stroke="#ff3c3c"/><line x1="1152.5" y1="311" x2="1152.5" y2="323" stroke="#ff3c3c"/><rect x="1149.5" y="309.5" width="6" height="2" fill="none" stroke="#ff3c3c"/><line x1="1163.5" y1="289" x2="1163.5" y2="331" stroke="#54ffff"/><rect x="1160" y="313" width="7" height="10" fill="#54ffff"/><line x1="1173.5" y1="323" x2="1173.5" y2="357" stroke="#54ffff"/><rect x="1170" y="339" width="7" height="14" fill="#54ffff"/><line x1="1184.5" y1="316" x2="1184.5" y2="330" stroke="#ff3c3c"/><line x1="1184.5" y1="363" x2="1184.5" y2="374" stroke="#ff3c3c"/><rect x="1181.5" y="330.5" width="6" height="33" fill="none" stroke="#ff3c3c"/><line x1="1194.5" y1="338" x2="1194.5" y2="372" stroke="#54ffff"/><rect x="1191" y="344" width="7" height="28" fill="#54ffff"/><line x1="1205.5" y1="373" x2="1205.5" y2="377" stroke="#ff3c3c"/><line x1="1205.5" y1="390" x2="1205.5" y2="394" stroke="#ff3c3c"/><rect x="1202.5" y="377.5" width="6" height="13" fill="none" stroke="#ff3c3c"/><line x1="1215.5" y1="372" x2="1215.5" y2="372" stroke="#ff3c3c"/><line x1="1215.5" y1="373" x2="1215.5" y2="382" stroke="#ff3c3c"/><rect x="1212.5" y="372.5" width="6" height="1" fill="none" stroke="#ff3c3c"/><line x1="1226.5" y1="357" x2="1226.5" y2="363" stroke="#ff3c3c"/><line x1="1226.5" y1="368" x2="1226.5" y2="379" stroke="#ff3c3c"/><rect x="1223.5" y="363.5" width="6" height="5" fill="none" stroke="#ff3c3c"/><line x1="1237.5" y1="347" x2="1237.5" y2="351" stroke="#ff3c3c"/><line x1="1237.5" y1="373" x2="1237.5" y2="378" stroke="#ff3c3c"/><rect x="1234.5" y="351.5" width="6" height="22" fill="none" stroke="#ff3c3c"/><line x1="1247.5" y1="358" x2="1247.5" y2="398" stroke="#54ffff"/><rect x="1244" y="367" width="7" height="22" fill="#54ffff"/><line x1="1258.5" y1="334" x2="1258.5" y2="334" stroke="#ff3c3c"/><line x1="1258.5" y1="389" x2="1258.5" y2="394" stroke="#ff3c3c"/><rect x="1255.5" y="334.5" width="6" height="55" fill="none" stroke="#ff3c3c"/><line x1="1268.5" y1="332" x2="1268.5" y2="371" stroke="#54ffff"/><rect x="1265" y="343" width="7" height="15" fill="#54ffff"/><line x1="1279.5" y1="340" x2="1279.5" y2="383" stroke="#54ffff"/><rect x="1276" y="357" width="7" height="17" fill="#54ffff"/><line x1="1289.5" y1="343" x2="1289.5" y2="355" stroke="#ff3c3c"/><line x1="1289.5" y1="370" x2="1289.5" y2="381" stroke="#ff3c3c"/><rect x="1286.5" y="355.5" width="6" height="15" fill="none" stroke="#ff3c3c"/><line x1="1300.5" y1="299" x2="1300.5" y2="299" stroke="#ff3c3c"/><line x1="1300.5" y1="359" x2="1300.5" y2="366" stroke="#ff3c3c"/><rect x="1297.5" y="299.5" width="6" height="60" fill="none" stroke="#ff3c3c"/><line x1="1310.5" y1="311" x2="1310.5" y2="361" stroke="#54ffff"/><rect x="1307" y="316" width="7" height="35" fill="#54ffff"/><line x1="1321.5" y1="293" x2="1321.5" y2="293" stroke="#ff3c3c"/><line x1="1321.5" y1="352" x2="1321.5" y2="353" stroke="#ff3c3c"/><rect x="1318.5" y="293.5" width="6" height="59" fill="none" stroke="#ff3c3c"/><line x1="1331.5" y1="231" x2="1331.5" y2="250" stroke="#ff3c3c"/><line x1="1331.5" y1="284" x2="1331.5" y2="313" stroke="#ff3c3c"/><rect x="1328.5" y="250.5" width="6" height="34" fill="none" stroke="#ff3c3c"/><rect x="960" y="310" width="6" height="1.5" fill="#fff"/><rect x="970" y="248" width="7" height="1.5" fill="#fff"/><rect x="973" y="248" width="1.3" height="33" fill="#fff"/><rect x="981" y="181" width="7" height="1.5" fill="#fff"/><rect x="984" y="181" width="1.3" height="68" fill="#fff"/></g><line x1="197" y1="500" x2="805" y2="500" stroke="#009000" stroke-width="2"/><line x1="521" y1="516.5" x2="1047" y2="516.5" stroke="#008c00" stroke-width="1"/><line x1="997" y1="107.5" x2="1331" y2="107.5" stroke="#009000" stroke-width="1.2"/><line x1="929" y1="493.5" x2="1368" y2="493.5" stroke="#00ff00" stroke-width="1" stroke-dasharray="3 3"/><line x1="1299" y1="358.5" x2="1368" y2="358.5" stroke="#00ff00" stroke-width="1" stroke-dasharray="3 3"/><line x1="952" y1="376.5" x2="972" y2="376.5" stroke="#00ff00" stroke-width="1" stroke-dasharray="3 3"/><line x1="983" y1="180.5" x2="1004" y2="180.5" stroke="#00ff00" stroke-width="1" stroke-dasharray="3 3"/><line x1="977" y1="249.5" x2="993" y2="249.5" stroke="#00ff00" stroke-width="1" stroke-dasharray="3 3"/><line x1="362" y1="524.5" x2="889" y2="524.5" stroke="#ff00ff" stroke-width="1.2"/><line x1="836" y1="539.5" x2="1331" y2="539.5" stroke="#ff00ff" stroke-width="1.2"/><line x1="1184" y1="373.5" x2="1331" y2="373.5" stroke="#ff00ff" stroke-width="1.2"/><path d="M0,549 L374,549.5 Q378,540 380,533 Q383,524 386,521 L836,520.5 L848,542 L1205,542 L1213,420 L1215,384 L1227,379.5 L1331,379.5" fill="none" stroke="#ffff00" stroke-width="1.5" stroke-dasharray="4 4"/><rect x="0" y="0" width="1485" height="8" fill="#e8321e"/><rect x="0" y="0" width="30" height="8" fill="#b40000"/><circle cx="20" cy="-4" r="10" fill="#fff"/><rect x="986" y="0" width="38" height="8" fill="#d01010"/><rect x="773" y="0" width="2" height="3" fill="#fff"/><rect x="1410" y="0" width="1" height="8" fill="#b00000"/><rect x="0" y="28" width="1420" height="1" fill="#c00000"/><rect x="0" y="9" width="1" height="19" fill="#c00000"/><rect x="23" y="9" width="1" height="19" fill="#c00000"/><rect x="5.5" y="12.5" width="11.5" height="10" rx="2" fill="none" stroke="#707070" stroke-width="1.2"/><rect x="12" y="14" width="3" height="7" fill="#808080"/><rect x="1144" y="9" width="1" height="19" fill="#c00000"/><rect x="1177" y="9" width="1" height="19" fill="#c00000"/><rect x="1211" y="9" width="1" height="19" fill="#c00000"/><rect x="1245" y="9" width="1" height="19" fill="#c00000"/><rect x="1279" y="9" width="1" height="19" fill="#c00000"/><rect x="1313" y="9" width="1" height="19" fill="#c00000"/><rect x="1347" y="9" width="1" height="19" fill="#c00000"/><rect x="1381" y="9" width="1" height="19" fill="#c00000"/><circle cx="134" cy="38" r="6" fill="#808080"/><path d="M131,36.5 L134,39.5 L137,36.5" fill="none" stroke="#202020" stroke-width="1.2"/><path d="M1341.5,33.5 L1346.5,38.5 L1341.5,43.5 L1336.5,38.5 Z" fill="none" stroke="#a0a0a0" stroke-width="1"/><rect x="1354.5" y="33.5" width="11" height="9" rx="1.5" fill="none" stroke="#909090" stroke-width="1.2"/><rect x="1361" y="35" width="3" height="6" fill="#909090"/><rect x="1369" y="28" width="1" height="920" fill="#c00000"/><rect x="1420" y="8" width="1" height="940" fill="#c00000"/><rect x="1369" y="84" width="6" height="1" fill="#c00000"/><rect x="1369" y="161" width="6" height="1" fill="#c00000"/><rect x="1369" y="230" width="6" height="1" fill="#c00000"/><rect x="1369" y="293" width="6" height="1" fill="#c00000"/><rect x="1369" y="356" width="6" height="1" fill="#c00000"/><rect x="1369" y="413" width="6" height="1" fill="#c00000"/><rect x="1369" y="464" width="6" height="1" fill="#c00000"/><rect x="1369" y="510" width="6" height="1" fill="#c00000"/><rect x="1369" y="551" width="6" height="1" fill="#c00000"/><rect x="1370" y="365.5" width="50" height="16" fill="#1010a0"/><rect x="1370" y="365.5" width="50" height="1" fill="#c00000"/><rect x="1370" y="381" width="50" height="1" fill="#c00000"/><rect x="1357" y="250" width="12" height="1.2" fill="#c0c000"/><rect x="1427.5" y="66.5" width="60" height="21" fill="none" stroke="#e02020" stroke-width="1.2"/><rect x="1420" y="93" width="65" height="1" fill="#c00000"/><rect x="1420" y="183" width="65" height="1" fill="#d08020"/><rect x="1420" y="277" width="65" height="1" fill="#c00000"/><rect x="1420" y="374" width="65" height="1" fill="#c00000"/><rect x="1420" y="437" width="65" height="1" fill="#c00000"/><rect x="1420" y="479" width="65" height="1" fill="#c00000"/><line x1="1421" y1="570.5" x2="1485" y2="570.5" stroke="#c00000" stroke-dasharray="1 3"/><line x1="1421" y1="931.5" x2="1485" y2="931.5" stroke="#c00000" stroke-dasharray="1 3"/><rect x="0" y="574" width="1420" height="1" fill="#c00000"/><rect x="0" y="780" width="1420" height="1" fill="#c00000"/><rect x="1369" y="946" width="51" height="1.3" fill="#c00000"/><circle cx="8" cy="582.5" r="6" fill="#808080"/><path d="M5,581 L8,584 L11,581" fill="none" stroke="#202020" stroke-width="1.2"/><line x1="1" y1="624.5" x2="1366" y2="624.5" stroke="#b40000" stroke-dasharray="1 3" shape-rendering="crispEdges"/><line x1="1" y1="655.5" x2="1366" y2="655.5" stroke="#b40000" stroke-dasharray="1 3" shape-rendering="crispEdges"/><line x1="1" y1="685.5" x2="1366" y2="685.5" stroke="#b40000" stroke-dasharray="1 3" shape-rendering="crispEdges"/><line x1="1" y1="716.5" x2="1366" y2="716.5" stroke="#b40000" stroke-dasharray="1 3" shape-rendering="crispEdges"/><rect x="1369" y="594.0" width="6" height="1.2" fill="#c00000"/><rect x="1369" y="624.0" width="6" height="1.2" fill="#c00000"/><rect x="1369" y="655.0" width="6" height="1.2" fill="#c00000"/><rect x="1369" y="685.0" width="6" height="1.2" fill="#c00000"/><rect x="1369" y="716.0" width="6" height="1.2" fill="#c00000"/><circle cx="8" cy="789" r="6" fill="#808080"/><path d="M5,787.5 L8,790.5 L11,787.5" fill="none" stroke="#202020" stroke-width="1.2"/><line x1="1" y1="829.5" x2="1366" y2="829.5" stroke="#b40000" stroke-dasharray="1 3" shape-rendering="crispEdges"/><line x1="1" y1="858.5" x2="1366" y2="858.5" stroke="#b40000" stroke-dasharray="1 3" shape-rendering="crispEdges"/><line x1="1" y1="887.5" x2="1366" y2="887.5" stroke="#b40000" stroke-dasharray="1 3" shape-rendering="crispEdges"/><line x1="1" y1="916.5" x2="1366" y2="916.5" stroke="#b40000" stroke-dasharray="1 3" shape-rendering="crispEdges"/><rect x="1369" y="800.0" width="6" height="1.2" fill="#c00000"/><rect x="1369" y="829.0" width="6" height="1.2" fill="#c00000"/><rect x="1369" y="858.0" width="6" height="1.2" fill="#c00000"/><rect x="1369" y="887.0" width="6" height="1.2" fill="#c00000"/><rect x="1369" y="916.0" width="6" height="1.2" fill="#c00000"/><g><line x1="4.5" y1="670.5" x2="4.5" y2="678.3" stroke="#ff30ff" stroke-width="1.2"/><line x1="15.5" y1="670.5" x2="15.5" y2="677.3" stroke="#2090ff" stroke-width="1.2"/><line x1="26.5" y1="670.5" x2="26.5" y2="678.3" stroke="#ff30ff" stroke-width="1.2"/><line x1="36.5" y1="670.5" x2="36.5" y2="680.1" stroke="#ff30ff" stroke-width="1.2"/><line x1="47.5" y1="670.5" x2="47.5" y2="677.0" stroke="#2090ff" stroke-width="1.2"/><line x1="57.5" y1="670.5" x2="57.5" y2="675.5" stroke="#ff30ff" stroke-width="1.2"/><line x1="68.5" y1="670.5" x2="68.5" y2="677.0" stroke="#ff30ff" stroke-width="1.2"/><line x1="78.5" y1="670.5" x2="78.5" y2="676.3" stroke="#2090ff" stroke-width="1.2"/><line x1="89.5" y1="670.5" x2="89.5" y2="677.3" stroke="#ff30ff" stroke-width="1.2"/><line x1="99.5" y1="670.5" x2="99.5" y2="676.3" stroke="#2090ff" stroke-width="1.2"/><line x1="110.5" y1="670.5" x2="110.5" y2="675.5" stroke="#2090ff" stroke-width="1.2"/><line x1="120.5" y1="670.5" x2="120.5" y2="676.3" stroke="#ff30ff" stroke-width="1.2"/><line x1="131.5" y1="670.5" x2="131.5" y2="678.3" stroke="#ff30ff" stroke-width="1.2"/><line x1="141.5" y1="670.5" x2="141.5" y2="679.4" stroke="#ff30ff" stroke-width="1.2"/><line x1="152.5" y1="670.5" x2="152.5" y2="679.4" stroke="#ff30ff" stroke-width="1.2"/><line x1="162.5" y1="670.5" x2="162.5" y2="683.2" stroke="#ff30ff" stroke-width="1.2"/><line x1="173.5" y1="670.5" x2="173.5" y2="684.8" stroke="#ff30ff" stroke-width="1.2"/><line x1="184.5" y1="670.5" x2="184.5" y2="686.0" stroke="#ff30ff" stroke-width="1.2"/><line x1="194.5" y1="670.5" x2="194.5" y2="688.3" stroke="#ff30ff" stroke-width="1.2"/><line x1="205.5" y1="670.5" x2="205.5" y2="682.5" stroke="#2090ff" stroke-width="1.2"/><line x1="215.5" y1="670.5" x2="215.5" y2="680.1" stroke="#2090ff" stroke-width="1.2"/><line x1="226.5" y1="669.3" x2="226.5" y2="682.3" stroke="#ff30ff" stroke-width="1.2"/><line x1="236.5" y1="669.3" x2="236.5" y2="687.9" stroke="#ff30ff" stroke-width="1.2"/><line x1="247.5" y1="669.3" x2="247.5" y2="692.5" stroke="#ff30ff" stroke-width="1.2"/><line x1="257.5" y1="669.3" x2="257.5" y2="691.8" stroke="#2090ff" stroke-width="1.2"/><line x1="268.5" y1="669.3" x2="268.5" y2="691.3" stroke="#ff30ff" stroke-width="1.2"/><line x1="278.5" y1="669.3" x2="278.5" y2="689.4" stroke="#2090ff" stroke-width="1.2"/><line x1="289.5" y1="669.3" x2="289.5" y2="690.2" stroke="#ff30ff" stroke-width="1.2"/><line x1="299.5" y1="669.3" x2="299.5" y2="695.3" stroke="#ff30ff" stroke-width="1.2"/><line x1="310.5" y1="670.5" x2="310.5" y2="688.7" stroke="#2090ff" stroke-width="1.2"/><line x1="320.5" y1="670.5" x2="320.5" y2="687.9" stroke="#2090ff" stroke-width="1.2"/><line x1="331.5" y1="670.5" x2="331.5" y2="686.3" stroke="#2090ff" stroke-width="1.2"/><line x1="341.5" y1="670.5" x2="341.5" y2="686.0" stroke="#ff30ff" stroke-width="1.2"/><line x1="352.5" y1="670.5" x2="352.5" y2="687.1" stroke="#ff30ff" stroke-width="1.2"/><line x1="363.5" y1="670.5" x2="363.5" y2="685.1" stroke="#2090ff" stroke-width="1.2"/><line x1="373.5" y1="670.5" x2="373.5" y2="684.5" stroke="#2090ff" stroke-width="1.2"/><line x1="384.5" y1="670.5" x2="384.5" y2="686.0" stroke="#ff30ff" stroke-width="1.2"/><line x1="394.5" y1="670.5" x2="394.5" y2="685.6" stroke="#ff30ff" stroke-width="1.2"/><line x1="405.5" y1="670.5" x2="405.5" y2="687.1" stroke="#ff30ff" stroke-width="1.2"/><line x1="415.5" y1="670.5" x2="415.5" y2="685.6" stroke="#2090ff" stroke-width="1.2"/><line x1="426.5" y1="670.5" x2="426.5" y2="682.0" stroke="#2090ff" stroke-width="1.2"/><line x1="436.5" y1="670.5" x2="436.5" y2="680.1" stroke="#2090ff" stroke-width="1.2"/><line x1="447.5" y1="670.5" x2="447.5" y2="680.9" stroke="#ff30ff" stroke-width="1.2"/><line x1="457.5" y1="670.5" x2="457.5" y2="682.5" stroke="#ff30ff" stroke-width="1.2"/><line x1="468.5" y1="670.5" x2="468.5" y2="682.5" stroke="#ff30ff" stroke-width="1.2"/><line x1="478.5" y1="670.5" x2="478.5" y2="683.5" stroke="#ff30ff" stroke-width="1.2"/><line x1="489.5" y1="670.5" x2="489.5" y2="684.5" stroke="#ff30ff" stroke-width="1.2"/><line x1="499.5" y1="670.5" x2="499.5" y2="685.6" stroke="#ff30ff" stroke-width="1.2"/><line x1="510.5" y1="670.5" x2="510.5" y2="686.0" stroke="#ff30ff" stroke-width="1.2"/><line x1="520.5" y1="670.5" x2="520.5" y2="685.6" stroke="#2090ff" stroke-width="1.2"/><line x1="531.5" y1="670.5" x2="531.5" y2="686.0" stroke="#ff30ff" stroke-width="1.2"/><line x1="542.5" y1="670.5" x2="542.5" y2="684.8" stroke="#2090ff" stroke-width="1.2"/><line x1="552.5" y1="670.5" x2="552.5" y2="687.9" stroke="#ff30ff" stroke-width="1.2"/><line x1="563.5" y1="670.5" x2="563.5" y2="688.2" stroke="#ff30ff" stroke-width="1.2"/><line x1="573.5" y1="670.5" x2="573.5" y2="685.6" stroke="#2090ff" stroke-width="1.2"/><line x1="584.5" y1="670.5" x2="584.5" y2="684.5" stroke="#2090ff" stroke-width="1.2"/><line x1="594.5" y1="670.5" x2="594.5" y2="684.5" stroke="#ff30ff" stroke-width="1.2"/><line x1="605.5" y1="670.5" x2="605.5" y2="686.3" stroke="#ff30ff" stroke-width="1.2"/><line x1="615.5" y1="670.5" x2="615.5" y2="686.3" stroke="#ff30ff" stroke-width="1.2"/><line x1="626.5" y1="670.5" x2="626.5" y2="687.9" stroke="#ff30ff" stroke-width="1.2"/><line x1="636.5" y1="670.5" x2="636.5" y2="687.9" stroke="#ff30ff" stroke-width="1.2"/><line x1="647.5" y1="670.5" x2="647.5" y2="687.6" stroke="#2090ff" stroke-width="1.2"/><line x1="657.5" y1="670.5" x2="657.5" y2="688.7" stroke="#ff30ff" stroke-width="1.2"/><line x1="668.5" y1="670.5" x2="668.5" y2="690.2" stroke="#ff30ff" stroke-width="1.2"/><line x1="678.5" y1="670.5" x2="678.5" y2="685.6" stroke="#2090ff" stroke-width="1.2"/><line x1="689.5" y1="670.5" x2="689.5" y2="688.0" stroke="#ff30ff" stroke-width="1.2"/><line x1="699.5" y1="670.5" x2="699.5" y2="688.0" stroke="#2090ff" stroke-width="1.2"/><line x1="710.5" y1="670.5" x2="710.5" y2="689.0" stroke="#ff30ff" stroke-width="1.2"/><line x1="721.5" y1="670.5" x2="721.5" y2="688.0" stroke="#2090ff" stroke-width="1.2"/><line x1="731.5" y1="670.5" x2="731.5" y2="688.0" stroke="#ff30ff" stroke-width="1.2"/><line x1="742.5" y1="670.5" x2="742.5" y2="691.0" stroke="#ff30ff" stroke-width="1.2"/><line x1="752.5" y1="670.5" x2="752.5" y2="689.5" stroke="#2090ff" stroke-width="1.2"/><line x1="763.5" y1="670.5" x2="763.5" y2="690.3" stroke="#ff30ff" stroke-width="1.2"/><line x1="773.5" y1="670.5" x2="773.5" y2="689.5" stroke="#2090ff" stroke-width="1.2"/><line x1="784.5" y1="670.5" x2="784.5" y2="685.3" stroke="#2090ff" stroke-width="1.2"/><line x1="794.5" y1="670.5" x2="794.5" y2="677.1" stroke="#2090ff" stroke-width="1.2"/><line x1="805.5" y1="670.5" x2="805.5" y2="677.1" stroke="#ff30ff" stroke-width="1.2"/><line x1="815.5" y1="670.5" x2="815.5" y2="672.9" stroke="#2090ff" stroke-width="1.2"/><line x1="826.5" y1="670.5" x2="826.5" y2="673.2" stroke="#ff30ff" stroke-width="1.2"/><line x1="836.5" y1="670.5" x2="836.5" y2="674.8" stroke="#ff30ff" stroke-width="1.2"/><line x1="847.5" y1="670.5" x2="847.5" y2="674.5" stroke="#2090ff" stroke-width="1.2"/><line x1="857.5" y1="670.5" x2="857.5" y2="679.4" stroke="#ff30ff" stroke-width="1.2"/><line x1="868.5" y1="670.5" x2="868.5" y2="690.0" stroke="#ff30ff" stroke-width="1.2"/><line x1="878.5" y1="670.5" x2="878.5" y2="688.0" stroke="#2090ff" stroke-width="1.2"/><line x1="889.5" y1="670.5" x2="889.5" y2="686.4" stroke="#2090ff" stroke-width="1.2"/><line x1="900.5" y1="670.2" x2="900.5" y2="688.5" stroke="#ff30ff" stroke-width="1.2"/><line x1="910.5" y1="670.8" x2="910.5" y2="689.2" stroke="#ff30ff" stroke-width="1.2"/><line x1="921.5" y1="670.2" x2="921.5" y2="688.2" stroke="#2090ff" stroke-width="1.2"/><line x1="931.5" y1="668.6" x2="931.5" y2="690.1" stroke="#ff30ff" stroke-width="1.2"/><line x1="942.5" y1="667.0" x2="942.5" y2="718.6" stroke="#ff30ff" stroke-width="1.2"/><line x1="952.5" y1="666.1" x2="952.5" y2="718.3" stroke="#ff30ff" stroke-width="1.2"/><line x1="963.5" y1="664.8" x2="963.5" y2="753.4" stroke="#ff30ff" stroke-width="1.2"/><line x1="973.5" y1="663.2" x2="973.5" y2="759.4" stroke="#ff30ff" stroke-width="1.2"/><line x1="984.5" y1="662.9" x2="984.5" y2="766.1" stroke="#ff30ff" stroke-width="1.2"/><line x1="994.5" y1="661.3" x2="994.5" y2="759.7" stroke="#2090ff" stroke-width="1.2"/><line x1="1005.5" y1="664.5" x2="1005.5" y2="776.2" stroke="#ff30ff" stroke-width="1.2"/><line x1="1015.5" y1="664.8" x2="1015.5" y2="750.3" stroke="#2090ff" stroke-width="1.2"/><line x1="1026.5" y1="664.8" x2="1026.5" y2="755.0" stroke="#ff30ff" stroke-width="1.2"/><line x1="1036.5" y1="666.1" x2="1036.5" y2="757.2" stroke="#2090ff" stroke-width="1.2"/><line x1="1047.5" y1="668.6" x2="1047.5" y2="732.8" stroke="#2090ff" stroke-width="1.2"/><line x1="1058.5" y1="669.6" x2="1058.5" y2="718.6" stroke="#2090ff" stroke-width="1.2"/><line x1="1068.5" y1="669.6" x2="1068.5" y2="703.4" stroke="#2090ff" stroke-width="1.2"/><line x1="1079.5" y1="670.2" x2="1079.5" y2="713.9" stroke="#ff30ff" stroke-width="1.2"/><line x1="1089.5" y1="669.6" x2="1089.5" y2="704.4" stroke="#2090ff" stroke-width="1.2"/><line x1="1100.5" y1="668.6" x2="1100.5" y2="705.6" stroke="#ff30ff" stroke-width="1.2"/><line x1="1110.5" y1="668.6" x2="1110.5" y2="705.9" stroke="#ff30ff" stroke-width="1.2"/><line x1="1121.5" y1="667.0" x2="1121.5" y2="716.1" stroke="#ff30ff" stroke-width="1.2"/><line x1="1131.5" y1="667.0" x2="1131.5" y2="717.0" stroke="#ff30ff" stroke-width="1.2"/><line x1="1142.5" y1="667.7" x2="1142.5" y2="714.5" stroke="#2090ff" stroke-width="1.2"/><line x1="1152.5" y1="668.6" x2="1152.5" y2="705.0" stroke="#2090ff" stroke-width="1.2"/><line x1="1163.5" y1="669.6" x2="1163.5" y2="701.2" stroke="#2090ff" stroke-width="1.2"/><line x1="1173.5" y1="670.2" x2="1173.5" y2="694.6" stroke="#2090ff" stroke-width="1.2"/><line x1="1184.5" y1="670.8" x2="1184.5" y2="688.2" stroke="#2090ff" stroke-width="1.2"/><line x1="1194.5" y1="671.8" x2="1194.5" y2="686.6" stroke="#2090ff" stroke-width="1.2"/><line x1="1205.5" y1="671.1" x2="1205.5" y2="681.3" stroke="#2090ff" stroke-width="1.2"/><line x1="1215.5" y1="670.8" x2="1215.5" y2="682.8" stroke="#ff30ff" stroke-width="1.2"/><line x1="1226.5" y1="670.8" x2="1226.5" y2="682.8" stroke="#ff30ff" stroke-width="1.2"/><line x1="1237.5" y1="670.8" x2="1237.5" y2="682.8" stroke="#2090ff" stroke-width="1.2"/><line x1="1247.5" y1="670.8" x2="1247.5" y2="677.5" stroke="#2090ff" stroke-width="1.2"/><line x1="1258.5" y1="670.8" x2="1258.5" y2="678.7" stroke="#ff30ff" stroke-width="1.2"/><line x1="1268.5" y1="670.2" x2="1268.5" y2="682.8" stroke="#ff30ff" stroke-width="1.2"/><line x1="1279.5" y1="670.8" x2="1279.5" y2="679.7" stroke="#2090ff" stroke-width="1.2"/><line x1="1289.5" y1="670.2" x2="1289.5" y2="681.3" stroke="#ff30ff" stroke-width="1.2"/><line x1="1300.5" y1="669.2" x2="1300.5" y2="683.8" stroke="#ff30ff" stroke-width="1.2"/><line x1="1310.5" y1="669.6" x2="1310.5" y2="685.4" stroke="#ff30ff" stroke-width="1.2"/><line x1="1321.5" y1="668.6" x2="1321.5" y2="687.0" stroke="#ff30ff" stroke-width="1.2"/><line x1="1331.5" y1="667.0" x2="1331.5" y2="695.5" stroke="#ff30ff" stroke-width="1.2"/></g><polyline points="4.5,670.5 15.0,670.5 25.6,670.5 36.1,670.5 46.6,670.5 57.1,670.5 67.7,670.5 78.2,670.5 88.7,670.5 99.3,670.5 109.8,670.5 120.3,670.5 130.9,670.5 141.4,670.5 151.9,670.5 162.4,670.5 173.0,670.5 183.5,670.5 194.0,670.5 204.6,670.5 215.1,670.5 225.6,669.3 236.2,669.3 246.7,669.3 257.2,669.3 267.8,669.3 278.3,669.3 288.8,669.3 299.3,669.3 309.9,670.5 320.4,670.5 330.9,670.5 341.5,670.5 352.0,670.5 362.5,670.5 373.0,670.5 383.6,670.5 394.1,670.5 404.6,670.5 415.2,670.5 425.7,670.5 436.2,670.5 446.8,670.5 457.3,670.5 467.8,670.5 478.3,670.5 488.9,670.5 499.4,670.5 509.9,670.5 520.5,670.5 531.0,670.5 541.5,670.5 552.1,670.5 562.6,670.5 573.1,670.5 583.6,670.5 594.2,670.5 604.7,670.5 615.2,670.5 625.8,670.5 636.3,670.5 646.8,670.5 657.4,670.5 667.9,670.5 678.4,670.5 688.9,670.5 699.5,670.5 710.0,670.5 720.5,670.5 731.1,670.5 741.6,670.5 752.1,670.5 762.7,670.5 773.2,670.5 783.7,670.5 794.2,670.5 804.8,670.5 815.3,670.5 825.8,670.5 836.4,670.5 846.9,670.5 857.4,670.5 868.0,670.5 878.5,670.5 889.0,670.5 899.5,670.2 910.1,670.8 920.6,670.2 931.1,668.6 941.7,667.0 952.2,666.1 962.7,664.8 973.3,663.2 983.8,662.9 994.3,661.3 1004.8,664.5 1015.4,664.8 1025.9,664.8 1036.4,666.1 1047.0,668.6 1057.5,669.6 1068.0,669.6 1078.6,670.2 1089.1,669.6 1099.6,668.6 1110.1,668.6 1120.7,667.0 1131.2,667.0 1141.7,667.7 1152.3,668.6 1162.8,669.6 1173.3,670.2 1183.9,670.8 1194.4,671.8 1204.9,671.1 1215.4,670.8 1226.0,670.8 1236.5,670.8 1247.0,670.8 1257.6,670.8 1268.1,670.2 1278.6,670.8 1289.2,670.2 1299.7,669.2 1310.2,669.6 1320.8,668.6 1331.3,667.0" fill="none" stroke="#ffffff" stroke-width="1.3" stroke-dasharray="3 3"/><polyline points="4.5,678.3 15.0,677.3 25.6,678.3 36.1,680.1 46.6,677.0 57.1,675.5 67.7,677.0 78.2,676.3 88.7,677.3 99.3,676.3 109.8,675.5 120.3,676.3 130.9,678.3 141.4,679.4 151.9,679.4 162.4,683.2 173.0,684.8 183.5,686.0 194.0,688.3 204.6,682.5 215.1,680.1 225.6,682.3 236.2,687.9 246.7,692.5 257.2,691.8 267.8,691.3 278.3,689.4 288.8,690.2 299.3,695.3 309.9,688.7 320.4,687.9 330.9,686.3 341.5,686.0 352.0,687.1 362.5,685.1 373.0,684.5 383.6,686.0 394.1,685.6 404.6,687.1 415.2,685.6 425.7,682.0 436.2,680.1 446.8,680.9 457.3,682.5 467.8,682.5 478.3,683.5 488.9,684.5 499.4,685.6 509.9,686.0 520.5,685.6 531.0,686.0 541.5,684.8 552.1,687.9 562.6,688.2 573.1,685.6 583.6,684.5 594.2,684.5 604.7,686.3 615.2,686.3 625.8,687.9 636.3,687.9 646.8,687.6 657.4,688.7 667.9,690.2 678.4,685.6 688.9,688.0 699.5,688.0 710.0,689.0 720.5,688.0 731.1,688.0 741.6,691.0 752.1,689.5 762.7,690.3 773.2,689.5 783.7,685.3 794.2,677.1 804.8,677.1 815.3,672.9 825.8,673.2 836.4,674.8 846.9,674.5 857.4,679.4 868.0,690.0 878.5,688.0 889.0,686.4 899.5,688.5 910.1,689.2 920.6,688.2 931.1,690.1 941.7,718.6 952.2,718.3 962.7,753.4 973.3,759.4 983.8,766.1 994.3,759.7 1004.8,776.2 1015.4,750.3 1025.9,755.0 1036.4,757.2 1047.0,732.8 1057.5,718.6 1068.0,703.4 1078.6,713.9 1089.1,704.4 1099.6,705.6 1110.1,705.9 1120.7,716.1 1131.2,717.0 1141.7,714.5 1152.3,705.0 1162.8,701.2 1173.3,694.6 1183.9,688.2 1194.4,686.6 1204.9,681.3 1215.4,682.8 1226.0,682.8 1236.5,682.8 1247.0,677.5 1257.6,678.7 1268.1,682.8 1278.6,679.7 1289.2,681.3 1299.7,683.8 1310.2,685.4 1320.8,687.0 1331.3,695.5" fill="none" stroke="#ff2020" stroke-width="1.3"/><polyline points="4.5,692.5 15.0,694.4 25.6,692.5 36.1,690.2 46.6,695.3 57.1,695.3 67.7,693.3 78.2,694.4 88.7,694.4 99.3,694.4 109.8,695.3 120.3,694.0 130.9,692.5 141.4,691.0 151.9,691.0 162.4,687.9 173.0,684.8 183.5,684.5 194.0,683.2 204.6,689.7 215.1,691.0 225.6,687.9 236.2,682.5 246.7,679.4 257.2,680.1 267.8,680.1 278.3,680.9 288.8,680.9 299.3,676.3 309.9,682.5 320.4,683.2 330.9,685.6 341.5,684.5 352.0,684.5 362.5,685.1 373.0,686.6 383.6,684.5 394.1,684.5 404.6,684.8 415.2,685.1 425.7,687.9 436.2,690.2 446.8,689.1 457.3,688.2 467.8,688.2 478.3,687.1 488.9,687.1 499.4,685.6 509.9,684.5 520.5,685.6 531.0,684.5 541.5,685.1 552.1,683.2 562.6,682.5 573.1,685.6 583.6,687.1 594.2,686.3 604.7,685.1 615.2,684.8 625.8,682.5 636.3,682.5 646.8,683.5 657.4,683.2 667.9,681.7 678.4,685.3 688.9,682.5 699.5,683.3 710.0,681.3 720.5,682.5 731.1,682.5 741.6,680.2 752.1,681.8 762.7,681.4 773.2,681.8 783.7,684.4 794.2,693.4 804.8,694.1 815.3,698.0 825.8,696.2 836.4,695.7 846.9,696.2 857.4,689.5 868.0,681.8 878.5,682.5 889.0,683.3 899.5,682.2 910.1,682.8 920.6,683.5 931.1,680.6 941.7,652.8 952.2,653.4 962.7,618.0 973.3,610.7 983.8,604.4 994.3,611.0 1004.8,594.2 1015.4,620.5 1025.9,614.8 1036.4,614.2 1047.0,637.0 1057.5,651.2 1068.0,667.0 1078.6,656.6 1089.1,667.0 1099.6,665.4 1110.1,663.9 1120.7,655.9 1131.2,653.7 1141.7,657.5 1152.3,667.0 1162.8,670.2 1173.3,678.1 1183.9,682.8 1194.4,683.5 1204.9,689.2 1215.4,688.5 1226.0,687.6 1236.5,688.5 1247.0,693.9 1257.6,692.3 1268.1,688.2 1278.6,691.4 1289.2,689.2 1299.7,687.6 1310.2,686.0 1320.8,685.1 1331.3,674.9" fill="none" stroke="#00ff00" stroke-width="1.3"/><rect x="1369" y="609" width="3" height="1" fill="#c00000"/><rect x="1369" y="640" width="3" height="1" fill="#c00000"/><rect x="1369" y="670" width="3" height="1" fill="#c00000"/><rect x="1369" y="701" width="3" height="1" fill="#c00000"/><rect x="1369" y="815" width="3" height="1" fill="#c00000"/><rect x="1369" y="844" width="3" height="1" fill="#c00000"/><rect x="1369" y="873" width="3" height="1" fill="#c00000"/><rect x="1369" y="902" width="3" height="1" fill="#c00000"/><rect x="1369" y="780" width="51" height="2" fill="#c00000"/><rect x="1364" y="230" width="5" height="1" fill="#c00000"/><path d="M4,945.5 L829,945.5 L829,909 L836.5,800 L847.5,941 L857.5,800 L868,945.5 L1366,945.5" fill="none" stroke="#fff" stroke-width="1.3"/><path d="M197.5,499.5 Q194.7,498 193.3,498 Q190.5,498 190.5,500.8 Q190.5,502.5 194.0,503.5 Q197.5,504.5 197.5,506.0 Q197.5,508 194.0,508" fill="none" stroke="#00ff00" stroke-width="2"/><rect x="193" y="507" width="2" height="1.5" fill="#00ff00"/><path d="M189,508.0 L199,508.0 L194,513.6 Z" fill="#00ff00"/><path d="M282.0,498.5 Q279.2,497 277.8,497 Q275.0,497 275.0,499.8 Q275.0,501.5 278.5,502.5 Q282.0,503.5 282.0,505.0 Q282.0,507 278.5,507" fill="none" stroke="#00ff00" stroke-width="2"/><rect x="277.5" y="506" width="2" height="1.5" fill="#00ff00"/><path d="M273.5,507 L283.5,507 L278.5,513 Z" fill="#00ff00"/><path d="M524.5,515.5 Q521.7,514 520.3,514 Q517.5,514 517.5,516.8 Q517.5,518.5 521.0,519.5 Q524.5,520.5 524.5,522.0 Q524.5,524 521.0,524" fill="none" stroke="#00ff00" stroke-width="2"/><rect x="520" y="523" width="2" height="1.5" fill="#00ff00"/><path d="M516,524 L526,524 L521,530 Z" fill="#00ff00"/><path d="M998.0,101.5 Q995.2,100 993.8,100 Q991.0,100 991.0,103.08 Q991.0,104.95 994.5,106.05 Q998.0,107.15 998.0,108.8 Q998.0,111 994.5,111" fill="none" stroke="#00ff00" stroke-width="2"/><rect x="993.5" y="110" width="2" height="5.5" fill="#00ff00"/><path d="M989.5,115 L999.5,115 L994.5,121 Z" fill="#00ff00"/><path d="M306.5,488 L314.5,497 M314.5,488 L306.5,497" stroke="#00ff00" stroke-width="2.2"/><path d="M790.5,506 L798.5,515 M798.5,506 L790.5,515" stroke="#00ff00" stroke-width="2.2"/><path d="M366,527 L379,527 L372.5,536 Z" fill="#00ff00"/><path d="M419,523 L432,523 L425.5,532 Z" fill="#00ff00"/><path d="M808,527 L821,527 L814.5,536 Z" fill="#00ff00"/><path d="M1198.5,365.5 L1211,365.5 L1204.75,375 Z" fill="#00ff00"/><path d="M1240.5,360.5 L1253,360.5 L1246.75,369.5 Z" fill="#00ff00"/><path d="M1272.5,344 L1285,344 L1278.75,353 Z" fill="#00ff00"/><path d="M483.0,540 L495.0,540 L489,531 Z" fill="#ff0000"/><path d="M514.0,537 L526.0,537 L520,530 Z" fill="#ff0000"/><path d="M536.0,534 L548.0,534 L542,529 Z" fill="#ff0000"/><path d="M588.0,536 L600.0,536 L594,527 Z" fill="#ff0000"/><path d="M1251.7,403.5 L1263.7,403.5 L1257.7,395 Z" fill="#ff0000"/><path d="M357,531.5 L367,531.5 L362,525.5 Z" fill="#ff0000"/><rect x="361" y="530.5" width="2" height="8.5" fill="#ff0000"/><text x="362" y="549.5" text-anchor="middle" font-family="Liberation Sans" font-size="15" fill="#ff0000" stroke="#ff0000" stroke-width="0.9" transform="translate(362 0) scale(0.85 1) translate(-362 0)">B</text><path d="M831,547 L841,547 L836,541 Z" fill="#ff0000"/><rect x="835" y="546" width="2" height="6" fill="#ff0000"/><text x="836" y="562.5" text-anchor="middle" font-family="Liberation Sans" font-size="15" fill="#ff0000" stroke="#ff0000" stroke-width="0.9" transform="translate(836 0) scale(0.85 1) translate(-836 0)">R</text><path d="M1179,380.5 L1189,380.5 L1184,374.5 Z" fill="#ff0000"/><rect x="1183" y="379.5" width="2" height="6.5" fill="#ff0000"/><text x="1184" y="403" text-anchor="middle" font-family="Liberation Sans" font-size="15" fill="#ff0000" stroke="#ff0000" stroke-width="0.9" transform="translate(1184 0) scale(0.85 1) translate(-1184 0)">B</text><g transform="translate(268,536)"><path d="M-3.2,-4.5 Q-7,-1.5 -7,3 Q-7,8 0,8 Q7,8 7,3 Q7,-1.5 3.2,-4.5 Z" fill="url(#bagg)" stroke="#6a1818" stroke-width="1"/><path d="M-4,-8.5 L4,-8.5 L1.3,-4.5 L-1.3,-4.5 Z" fill="#ffff30" stroke="#6a1818" stroke-width="0.8"/><text x="0" y="6" text-anchor="middle" font-family="Liberation Serif" font-weight="bold" font-size="11" fill="#7a2020">$</text></g><g transform="translate(299,525)"><path d="M-3.2,-4.5 Q-7,-1.5 -7,3 Q-7,8 0,8 Q7,8 7,3 Q7,-1.5 3.2,-4.5 Z" fill="url(#bagg)" stroke="#6a1818" stroke-width="1"/><path d="M-4,-8.5 L4,-8.5 L1.3,-4.5 L-1.3,-4.5 Z" fill="#ffff30" stroke="#6a1818" stroke-width="0.8"/><text x="0" y="6" text-anchor="middle" font-family="Liberation Serif" font-weight="bold" font-size="11" fill="#7a2020">$</text></g><g transform="translate(542,546.5)"><path d="M-3.2,-4.5 Q-7,-1.5 -7,3 Q-7,8 0,8 Q7,8 7,3 Q7,-1.5 3.2,-4.5 Z" fill="url(#bagg)" stroke="#6a1818" stroke-width="1"/><path d="M-4,-8.5 L4,-8.5 L1.3,-4.5 L-1.3,-4.5 Z" fill="#ffff30" stroke="#6a1818" stroke-width="0.8"/><text x="0" y="6" text-anchor="middle" font-family="Liberation Serif" font-weight="bold" font-size="11" fill="#7a2020">$</text></g><g transform="translate(594,548.5)"><path d="M-3.2,-4.5 Q-7,-1.5 -7,3 Q-7,8 0,8 Q7,8 7,3 Q7,-1.5 3.2,-4.5 Z" fill="url(#bagg)" stroke="#6a1818" stroke-width="1"/><path d="M-4,-8.5 L4,-8.5 L1.3,-4.5 L-1.3,-4.5 Z" fill="#ffff30" stroke="#6a1818" stroke-width="0.8"/><text x="0" y="6" text-anchor="middle" font-family="Liberation Serif" font-weight="bold" font-size="11" fill="#7a2020">$</text></g><g transform="translate(857,549.7)"><path d="M-3.2,-4.5 Q-7,-1.5 -7,3 Q-7,8 0,8 Q7,8 7,3 Q7,-1.5 3.2,-4.5 Z" fill="url(#bagg)" stroke="#6a1818" stroke-width="1"/><path d="M-4,-8.5 L4,-8.5 L1.3,-4.5 L-1.3,-4.5 Z" fill="#ffff30" stroke="#6a1818" stroke-width="0.8"/><text x="0" y="6" text-anchor="middle" font-family="Liberation Serif" font-weight="bold" font-size="11" fill="#7a2020">$</text></g><circle cx="1214.5" cy="441.8" r="6.8" fill="#fff" stroke="#404040" stroke-width="0.8"/><path d="M1209.5,441.8 L1219.5,441.8 M1214.5,436.8 L1214.5,446.8" stroke="#ff0000" stroke-width="2.2"/><circle cx="1258" cy="447" r="6.8" fill="#fff" stroke="#404040" stroke-width="0.8"/><path d="M1253,447 L1263,447 M1258,442 L1258,452" stroke="#ff0000" stroke-width="2.2"/><circle cx="1289" cy="435.8" r="6.8" fill="#fff" stroke="#404040" stroke-width="0.8"/><path d="M1284,435.8 L1294,435.8 M1289,430.8 L1289,440.8" stroke="#ff0000" stroke-width="2.2"/><path d="M377.5,562 Q384,551 390.5,562 Z" fill="#fff"/><rect x="383" y="560" width="2" height="2" fill="#ff2020"/><g transform="translate(809.5,673)"><path d="M3,1.5 Q3,0 4.3,0 Q5.6,0 5.6,1.5 L5.6,4 Q9,3.5 11.5,5.5 Q12.5,8 12,11 Q11,14.5 7,14.5 Q4,14.5 2.5,12.5 L0,9 Q-0.3,7.8 1,7.8 L3,9.5 Z" fill="#ffc46a" stroke="#7a3a10" stroke-width="0.9"/><path d="M3.8,1.5 L3.8,8 M1,8.5 L3.5,12" stroke="#fff4e0" stroke-width="1"/></g><g transform="translate(820.6,674.5)"><path d="M3,1.5 Q3,0 4.3,0 Q5.6,0 5.6,1.5 L5.6,4 Q9,3.5 11.5,5.5 Q12.5,8 12,11 Q11,14.5 7,14.5 Q4,14.5 2.5,12.5 L0,9 Q-0.3,7.8 1,7.8 L3,9.5 Z" fill="#ffc46a" stroke="#7a3a10" stroke-width="0.9"/><path d="M3.8,1.5 L3.8,8 M1,8.5 L3.5,12" stroke="#fff4e0" stroke-width="1"/></g><path d="M1006,64.5 L1012,64.5 M1006,64 L1006,68 M1006,64.5 L1017,70" stroke="#c8c8c8" stroke-width="1" fill="none"/><path d="M110,553.5 L122,553.5 M110,553.5 L113,550.5 M110,553.5 L113,556.5" stroke="#c8c8c8" stroke-width="1" fill="none"/><rect x="827.5" y="485.5" width="49" height="460" fill="none" stroke="#ffff00" stroke-width="3"/>
</svg>
<div class="t" style="left:28px;top:12px;font-size:12px;color:#d0d0d0;">分时</div><div class="t" style="left:61px;top:12px;font-size:12px;color:#d0d0d0;">1分钟</div><div class="t" style="left:100px;top:12px;font-size:12px;color:#d0d0d0;">5分钟</div><div class="t" style="left:139px;top:12px;font-size:12px;color:#d0d0d0;">15分钟</div><div class="t" style="left:186px;top:12px;font-size:12px;color:#d0d0d0;">30分钟</div><div class="t" style="left:231px;top:12px;font-size:12px;color:#d0d0d0;">60分钟</div><div class="t" style="left:277px;top:12px;font-size:12px;color:#50ffff;">日线</div><div class="t" style="left:312px;top:12px;font-size:12px;color:#d0d0d0;">周线</div><div class="t" style="left:346px;top:12px;font-size:12px;color:#d0d0d0;">月线</div><div class="t" style="left:378px;top:12px;font-size:12px;color:#d0d0d0;">多周期</div><div class="t" style="left:422px;top:12px;font-size:12px;color:#d0d0d0;">更多 &gt;</div><div class="t" style="left:1149px;top:12px;font-size:12px;color:#d8d8d8;">复权</div><div class="t" style="left:1183px;top:12px;font-size:12px;color:#d8d8d8;">叠加</div><div class="t" style="left:1217px;top:12px;font-size:12px;color:#d8d8d8;">历史</div><div class="t" style="left:1251px;top:12px;font-size:12px;color:#d8d8d8;">统计</div><div class="t" style="left:1284px;top:12px;font-size:12px;color:#d8d8d8;">画线</div><div class="t" style="left:1320px;top:12px;font-size:12px;color:#d8d8d8;">F10</div><div class="t" style="left:1353px;top:12px;font-size:12px;color:#d8d8d8;">标记</div><div class="t" style="left:1389px;top:12px;font-size:12px;color:#d8d8d8;">返回</div><div class="t" style="left:4px;top:32px;font-size:12px;color:#d8d8d8;">直真科技(日线.前复权)</div><div class="t" style="left:143px;top:32px;font-size:12px;color:#e0e0e0;">高低无未来</div><div class="t" style="left:208px;top:32px;font-size:12px;color:#ff8c3c;">:</div><div class="t" style="left:215.5px;top:32px;font-size:12px;color:#ff8c3c;">29.36</div><div class="t" style="left:250px;top:32px;font-size:12px;color:#909090;">:</div><div class="t" style="left:257px;top:32px;font-size:12px;color:#909090;">27.94</div><div class="t" style="left:347px;top:32px;font-size:12px;color:#ffff00;">关键支撑: 23.76</div><div class="t" style="left:443px;top:32px;font-size:12px;color:#9030ff;">压力: 34.43</div><div class="t" style="left:2px;top:46px;font-size:12px;color:#d8d8d8;">2022/04/15/五</div><div class="t" style="left:81px;top:46px;font-size:12px;color:#ff3232;">开27.94</div><div class="t" style="left:126.5px;top:46px;font-size:12px;color:#ff3232;">高30.24</div><div class="t" style="left:173px;top:46px;font-size:12px;color:#00ff00;">低26.60</div><div class="t" style="left:219px;top:46px;font-size:12px;color:#ff3232;">收29.36</div><div class="t" style="left:265px;top:46px;font-size:12px;color:#e0e000;">量240589</div><div class="t" style="left:320.5px;top:46px;font-size:12px;color:#d8d8d8;">额6.94亿</div><div class="t" style="left:373px;top:46px;font-size:12px;color:#ff3232;">幅1.87(6.80%)</div><div class="t" style="left:455.5px;top:46px;font-size:12px;color:#d8d8d8;">换59.97%</div><div class="t" style="left:512px;top:46px;font-size:12px;color:#d8d8d8;">流通4012万</div><div class="t" style="left:579px;top:46px;font-size:12px;color:#e0e000;">软件服务</div><div class="t" style="left:1384px;top:78.5px;font-size:12px;color:#ff3232;">36.59</div><div class="t" style="left:1384px;top:155.5px;font-size:12px;color:#ff3232;">33.26</div><div class="t" style="left:1384px;top:224.5px;font-size:12px;color:#ff3232;">30.24</div><div class="t" style="left:1384px;top:287.5px;font-size:12px;color:#ff3232;">27.49</div><div class="t" style="left:1384px;top:350.5px;font-size:12px;color:#ff3232;">24.74</div><div class="t" style="left:1384px;top:407.5px;font-size:12px;color:#ff3232;">22.27</div><div class="t" style="left:1384px;top:458.5px;font-size:12px;color:#ff3232;">20.04</div><div class="t" style="left:1384px;top:504.5px;font-size:12px;color:#ff3232;">18.04</div><div class="t" style="left:1384px;top:545.5px;font-size:12px;color:#ff3232;">16.23</div><div class="t" style="left:1371px;top:368px;font-size:12px;color:#e0e0ff;">23.66</div><div class="t" style="left:1424px;top:16px;font-size:19px;color:#ffff00;">直真科技</div><div class="t" style="left:1424px;top:41px;font-size:18px;color:#ff3232;font-weight:bold;">29.36</div><div class="t" style="left:1481px;top:41px;font-size:18px;color:#ff3232;font-weight:bold;">1</div><div class="t" style="left:1443px;top:70px;font-size:12px;color:#ff3232;">买入</div><div class="t" style="left:1423px;top:96px;font-size:16px;color:#d8d8d8;">卖五</div><div class="t" style="left:1423px;top:114px;font-size:16px;color:#d8d8d8;">卖四</div><div class="t" style="left:1423px;top:132px;font-size:16px;color:#d8d8d8;">卖三</div><div class="t" style="left:1423px;top:150px;font-size:16px;color:#d8d8d8;">卖二</div><div class="t" style="left:1423px;top:168px;font-size:16px;color:#d8d8d8;">卖一</div><div class="t" style="left:1423px;top:187px;font-size:16px;color:#d8d8d8;">买一</div><div class="t" style="left:1423px;top:205px;font-size:16px;color:#d8d8d8;">买二</div><div class="t" style="left:1423px;top:223px;font-size:16px;color:#d8d8d8;">买三</div><div class="t" style="left:1423px;top:241px;font-size:16px;color:#d8d8d8;">买四</div><div class="t" style="left:1423px;top:259px;font-size:16px;color:#d8d8d8;">买五</div><div class="t" style="left:1423px;top:280px;font-size:16px;color:#d8d8d8;">今开</div><div class="t" style="left:1423px;top:299px;font-size:16px;color:#d8d8d8;">最高</div><div class="t" style="left:1423px;top:318px;font-size:16px;color:#d8d8d8;">最低</div><div class="t" style="left:1423px;top:337px;font-size:16px;color:#d8d8d8;">现量</div><div class="t" style="left:1423px;top:356px;font-size:16px;color:#d8d8d8;">外盘</div><div class="t" style="left:1423px;top:378.0px;font-size:16px;color:#d8d8d8;">换手</div><div class="t" style="left:1423px;top:396.5px;font-size:16px;color:#d8d8d8;">净资</div><div class="t" style="left:1423px;top:415.0px;font-size:16px;color:#d8d8d8;">收益(三)</div><div class="t" style="left:1423px;top:441.0px;font-size:16px;color:#d8d8d8;">净流入额</div><div class="t" style="left:1423px;top:458.5px;font-size:16px;color:#d8d8d8;">大宗流入</div><div class="t" style="left:1423px;top:482.5px;font-size:14px;color:#d8d8d8;font-weight:bold;">14:55</div><div class="t" style="left:1423px;top:572.5px;font-size:14px;color:#d8d8d8;font-weight:bold;">14:56</div><div class="t" style="left:1423px;top:933px;font-size:14px;color:#d8d8d8;font-weight:bold;">14:57</div><div class="t" style="left:18px;top:577px;font-size:12px;color:#d8d8d8;">对照</div><div class="t" style="left:47px;top:577px;font-size:12px;color:#ff2020;">主力: -0.07</div><div class="t" style="left:110px;top:577px;font-size:12px;color:#00ff00;">散户: 0.07</div><div class="t" style="left:169px;top:577px;font-size:12px;color:#e8e8e8;">热度: 0.12</div><div class="t" style="left:228px;top:577px;font-size:12px;color:#00ff00;">BBT: 0.19</div><div class="t" style="left:1391px;top:589.0px;font-size:12px;color:#ff3232;">0.60</div><div class="t" style="left:1391px;top:619.0px;font-size:12px;color:#ff3232;">0.40</div><div class="t" style="left:1391px;top:650.0px;font-size:12px;color:#ff3232;">0.20</div><div class="t" style="left:1391px;top:680.0px;font-size:12px;color:#ff3232;">0.00</div><div class="t" style="left:1386px;top:711.0px;font-size:12px;color:#ff3232;">-0.20</div><div class="t" style="left:18px;top:783px;font-size:12px;color:#e8e8e8;">选股幅图</div><div class="t" style="left:72px;top:783px;font-size:12px;color:#e8e8e8;">:0.00</div><div class="t" style="left:1391px;top:795.0px;font-size:12px;color:#ff3232;">1.00</div><div class="t" style="left:1391px;top:824.0px;font-size:12px;color:#ff3232;">0.80</div><div class="t" style="left:1391px;top:853.0px;font-size:12px;color:#ff3232;">0.60</div><div class="t" style="left:1391px;top:882.0px;font-size:12px;color:#ff3232;">0.40</div><div class="t" style="left:1391px;top:911.0px;font-size:12px;color:#ff3232;">0.20</div><div class="t" style="left:489px;top:520px;font-size:13px;color:#ff9898;letter-spacing:-0.5px;">←底部博弈</div><div class="t" style="left:520px;top:520px;font-size:13px;color:#ff9898;letter-spacing:-0.5px;">←底部博弈</div><div class="t" style="left:542px;top:519px;font-size:13px;color:#ff9898;letter-spacing:-0.5px;">←底部博弈</div><div class="t" style="left:594px;top:518px;font-size:13px;color:#ff9898;letter-spacing:-0.5px;">←底部博弈</div><div class="t" style="left:1258px;top:385px;font-size:13px;color:#ff9898;letter-spacing:-0.5px;">←底部博弈</div><div class="t" style="left:1020px;top:64px;font-size:13px;color:#d0d0d0;">37.43</div><div class="t" style="left:124px;top:547px;font-size:13px;color:#c8c8c8;">16.19</div><div class="t" style="left:947px;top:418px;font-size:14px;color:#d0d0d0;transform:scaleX(0.87);transform-origin:0 0;">22.12 - 22.21</div><div class="t" style="left:937px;top:464px;font-size:14px;color:#f0f0f0;transform:scaleX(0.87);transform-origin:0 0;">20.11 - 22.12</div><div class="t" style="left:1331px;top:372px;font-size:13px;color:#2080ff;width:37px;overflow:hidden;">关键支撑</div>
</body></html>
